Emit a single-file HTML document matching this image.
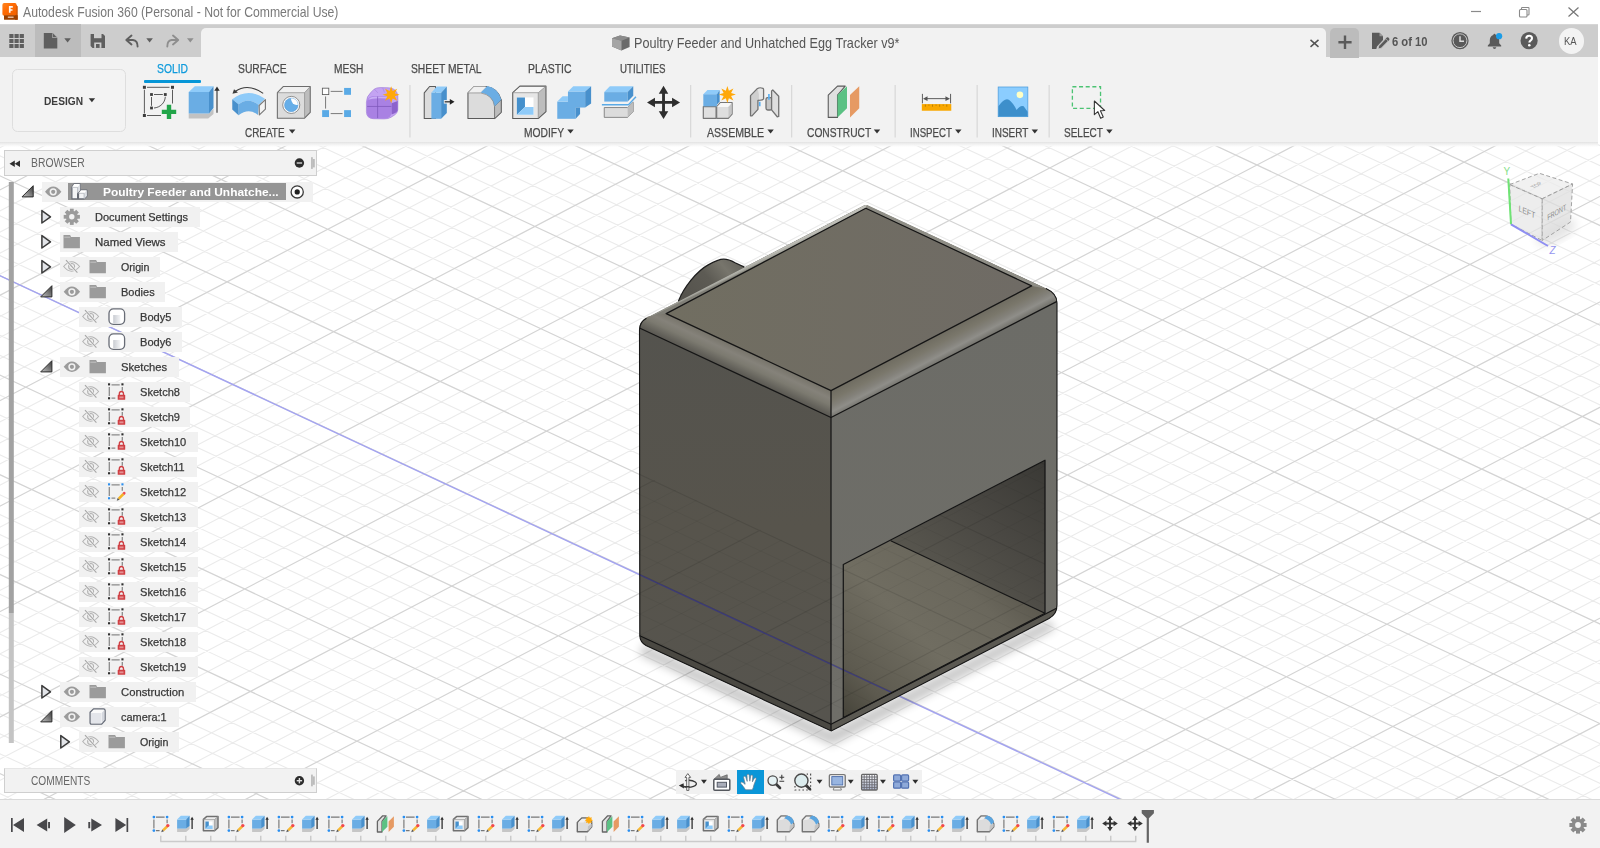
<!DOCTYPE html>
<html><head><meta charset="utf-8"><title>Autodesk Fusion 360</title>
<style>
html,body{margin:0;padding:0;width:1600px;height:848px;overflow:hidden;background:#fff;font-family:"Liberation Sans",sans-serif;}
.b{position:absolute;display:block;}
.t{position:absolute;line-height:20px;white-space:nowrap;transform-origin:0 50%;}
</style></head><body>
<svg class="b" style="left:0;top:0" width="1600" height="848" viewBox="0 0 1600 848">
<defs>
<clipPath id="cv"><rect x="0" y="141" width="1600" height="658"/></clipPath>
<clipPath id="thru"><polygon points="639.5,473 831,563 843.3,564.5 843.3,717.7 831,724.3 639.8,635.7"/><polygon points="843.3,564.5 1045,460.2 1045,613.3 843.3,717.7"/></clipPath>
<linearGradient id="gTop" x1="0" y1="0" x2="1" y2="0"><stop offset="0" stop-color="#716e61"/><stop offset="1" stop-color="#6f6b65"/></linearGradient>
<linearGradient id="gLeft" x1="0" y1="0" x2="0" y2="1"><stop offset="0" stop-color="#54534e"/><stop offset="0.5" stop-color="#57544c"/><stop offset="1" stop-color="#56544e"/></linearGradient>
<linearGradient id="gRight" x1="0" y1="0" x2="0" y2="1"><stop offset="0" stop-color="#6c6c67"/><stop offset="1" stop-color="#6f6e68"/></linearGradient>
<linearGradient id="gFl" gradientUnits="userSpaceOnUse" x1="750" y1="352.7" x2="739.6" y2="374.9"><stop offset="0" stop-color="#77746a"/><stop offset="0.3" stop-color="#85827a"/><stop offset="0.55" stop-color="#7c7a70"/><stop offset="0.85" stop-color="#64625b"/><stop offset="1" stop-color="#595751"/></linearGradient>
<linearGradient id="gFr" gradientUnits="userSpaceOnUse" x1="930" y1="338.9" x2="941.1" y2="360.1"><stop offset="0" stop-color="#6f6c61"/><stop offset="0.35" stop-color="#7a776b"/><stop offset="0.6" stop-color="#83817a"/><stop offset="0.8" stop-color="#8f8e89"/><stop offset="1" stop-color="#787771"/></linearGradient>
<linearGradient id="gFloor" gradientUnits="userSpaceOnUse" x1="843" y1="717" x2="1000" y2="560"><stop offset="0" stop-color="#454339"/><stop offset="0.18" stop-color="#5d5a4f"/><stop offset="0.5" stop-color="#706d61"/><stop offset="0.8" stop-color="#6a675c"/><stop offset="1" stop-color="#5a574d"/></linearGradient>
<linearGradient id="gWall" gradientUnits="userSpaceOnUse" x1="1045" y1="460" x2="930" y2="590"><stop offset="0" stop-color="#3a3935"/><stop offset="0.5" stop-color="#4a4843"/><stop offset="1" stop-color="#5a5850"/></linearGradient>
<linearGradient id="gCyl" gradientUnits="userSpaceOnUse" x1="688" y1="302" x2="736" y2="262"><stop offset="0" stop-color="#55534d"/><stop offset="0.5" stop-color="#5d5b54"/><stop offset="0.8" stop-color="#77756c"/><stop offset="1" stop-color="#68665f"/></linearGradient>
<linearGradient id="gBev" gradientUnits="userSpaceOnUse" x1="760" y1="259.5" x2="761.8" y2="263.2"><stop offset="0" stop-color="#bdbdb6"/><stop offset="0.6" stop-color="#a6a69e"/><stop offset="1" stop-color="#7f7e76"/></linearGradient>
<filter id="blur6" x="-20%" y="-20%" width="140%" height="140%"><feGaussianBlur stdDeviation="5"/></filter>
</defs>
<g clip-path="url(#cv)">
<rect x="0" y="141" width="1600" height="659" fill="#fff"/>
<path d="M-10.0 808.9L1610.0 1565.2M-10.0 788.9L1610.0 1545.3M-10.0 749.1L1610.0 1505.4M-10.0 729.2L1610.0 1485.5M-10.0 709.2L1610.0 1465.5M-10.0 689.3L1610.0 1445.6M-10.0 649.5L1610.0 1405.8M-10.0 629.5L1610.0 1385.8M-10.0 609.6L1610.0 1365.9M-10.0 589.7L1610.0 1346.0M-10.0 549.8L1610.0 1306.1M-10.0 529.9L1610.0 1286.2M-10.0 510.0L1610.0 1266.3M-10.0 490.1L1610.0 1246.4M-10.0 450.2L1610.0 1206.5M-10.0 430.3L1610.0 1186.6M-10.0 410.4L1610.0 1166.7M-10.0 390.4L1610.0 1146.7M-10.0 350.6L1610.0 1106.9M-10.0 330.7L1610.0 1087.0M-10.0 310.7L1610.0 1067.0M-10.0 290.8L1610.0 1047.1M-10.0 251.0L1610.0 1007.3M-10.0 231.0L1610.0 987.3M-10.0 211.1L1610.0 967.4M-10.0 191.2L1610.0 947.5M-10.0 151.3L1610.0 907.6M-10.0 131.4L1610.0 887.7M-10.0 111.5L1610.0 867.8M-10.0 91.5L1610.0 847.8M-10.0 51.7L1610.0 808.0M-10.0 31.8L1610.0 788.1M-10.0 11.8L1610.0 768.1M-10.0 -8.1L1610.0 748.2M-10.0 -47.9L1610.0 708.4M-10.0 -67.9L1610.0 688.4M-10.0 -87.8L1610.0 668.5M-10.0 -107.7L1610.0 648.6M-10.0 -147.6L1610.0 608.7M-10.0 -167.5L1610.0 588.8M-10.0 -187.4L1610.0 568.9M-10.0 -207.3L1610.0 549.0M-10.0 -247.2L1610.0 509.1M-10.0 -267.1L1610.0 489.2M-10.0 -287.0L1610.0 469.3M-10.0 -307.0L1610.0 449.3M-10.0 -346.8L1610.0 409.5M-10.0 -366.7L1610.0 389.6M-10.0 -386.7L1610.0 369.6M-10.0 -406.6L1610.0 349.7M-10.0 -446.5L1610.0 309.9M-10.0 -466.4L1610.0 289.9M-10.0 -486.3L1610.0 270.0M-10.0 -506.2L1610.0 250.1M-10.0 -546.1L1610.0 210.2M-10.0 -566.0L1610.0 190.3M-10.0 -585.9L1610.0 170.4M-10.0 -605.9L1610.0 150.4M-10.0 131.9L1610.0 -715.4M-10.0 152.9L1610.0 -694.3M-10.0 174.0L1610.0 -673.2M-10.0 216.2L1610.0 -631.1M-10.0 237.3L1610.0 -610.0M-10.0 258.4L1610.0 -588.9M-10.0 279.4L1610.0 -567.8M-10.0 321.6L1610.0 -525.7M-10.0 342.7L1610.0 -504.6M-10.0 363.8L1610.0 -483.5M-10.0 384.9L1610.0 -462.4M-10.0 427.0L1610.0 -420.2M-10.0 448.1L1610.0 -399.1M-10.0 469.2L1610.0 -378.1M-10.0 490.3L1610.0 -357.0M-10.0 532.4L1610.0 -314.8M-10.0 553.5L1610.0 -293.7M-10.0 574.6L1610.0 -272.6M-10.0 595.7L1610.0 -251.6M-10.0 637.9L1610.0 -209.4M-10.0 659.0L1610.0 -188.3M-10.0 680.0L1610.0 -167.2M-10.0 701.1L1610.0 -146.1M-10.0 743.3L1610.0 -104.0M-10.0 764.4L1610.0 -82.9M-10.0 785.5L1610.0 -61.8M-10.0 806.5L1610.0 -40.7M-10.0 848.7L1610.0 1.4M-10.0 869.8L1610.0 22.5M-10.0 890.9L1610.0 43.6M-10.0 912.0L1610.0 64.7M-10.0 954.1L1610.0 106.9M-10.0 975.2L1610.0 127.9M-10.0 996.3L1610.0 149.0M-10.0 1017.4L1610.0 170.1M-10.0 1059.5L1610.0 212.3M-10.0 1080.6L1610.0 233.4M-10.0 1101.7L1610.0 254.5M-10.0 1122.8L1610.0 275.5M-10.0 1165.0L1610.0 317.7M-10.0 1186.0L1610.0 338.8M-10.0 1207.1L1610.0 359.9M-10.0 1228.2L1610.0 381.0M-10.0 1270.4L1610.0 423.1M-10.0 1291.5L1610.0 444.2M-10.0 1312.6L1610.0 465.3M-10.0 1333.6L1610.0 486.4M-10.0 1375.8L1610.0 528.5M-10.0 1396.9L1610.0 549.6M-10.0 1418.0L1610.0 570.7M-10.0 1439.1L1610.0 591.8M-10.0 1481.2L1610.0 634.0M-10.0 1502.3L1610.0 655.0M-10.0 1523.4L1610.0 676.1M-10.0 1544.5L1610.0 697.2M-10.0 1586.6L1610.0 739.4M-10.0 1607.7L1610.0 760.5M-10.0 1628.8L1610.0 781.5M-10.0 1649.9L1610.0 802.6" stroke="#ebebeb" stroke-width="1.1" fill="none"/>
<path d="M-10.0 769.0L1610.0 1525.3M-10.0 669.4L1610.0 1425.7M-10.0 569.8L1610.0 1326.1M-10.0 470.1L1610.0 1226.4M-10.0 370.5L1610.0 1126.8M-10.0 270.9L1610.0 1027.2M-10.0 171.2L1610.0 927.6M-10.0 71.6L1610.0 827.9M-10.0 -28.0L1610.0 728.3M-10.0 -127.6L1610.0 628.7M-10.0 -227.3L1610.0 529.0M-10.0 -326.9L1610.0 429.4M-10.0 -426.5L1610.0 329.8M-10.0 -526.2L1610.0 230.2M-10.0 -625.8L1610.0 130.5M-10.0 195.1L1610.0 -652.2M-10.0 300.5L1610.0 -546.7M-10.0 405.9L1610.0 -441.3M-10.0 511.4L1610.0 -335.9M-10.0 616.8L1610.0 -230.5M-10.0 722.2L1610.0 -125.1M-10.0 827.6L1610.0 -19.6M-10.0 933.0L1610.0 85.8M-10.0 1038.5L1610.0 191.2M-10.0 1143.9L1610.0 296.6M-10.0 1249.3L1610.0 402.0M-10.0 1354.7L1610.0 507.5M-10.0 1460.1L1610.0 612.9M-10.0 1565.6L1610.0 718.3" stroke="#d4d4d4" stroke-width="1.2" fill="none"/>
<path d="M-10 271 L1160 818" stroke="#a3a3f0" stroke-width="1.4" fill="none"/>
<ellipse cx="1556" cy="232" rx="22" ry="9" fill="#000" opacity="0.10" filter="url(#blur6)" transform="rotate(-28 1556 232)"/>
<g stroke="#9a9a9a" stroke-width="0.9" stroke-dasharray="4 2.5" stroke-linejoin="round">
<polygon points="1509.7,184.6 1539.4,173.3 1572.6,184 1542.2,198.8" fill="#ececec" fill-opacity="0.72"/>
<polygon points="1509.7,184.6 1542.2,198.8 1542.2,240.5 1511,224.3" fill="#e6e6e6" fill-opacity="0.72"/>
<polygon points="1542.2,198.8 1572.6,184 1570.5,222 1542.2,240.5" fill="#dedede" fill-opacity="0.72"/>
</g>
<text transform="matrix(0.92,0.42,-0.05,1,1518.5,211)" font-family="Liberation Sans, sans-serif" font-size="8.5" fill="#8a8a8a" textLength="18" lengthAdjust="spacingAndGlyphs">LEFT</text>
<text transform="matrix(0.86,-0.5,0.05,1,1547.5,220.5)" font-family="Liberation Sans, sans-serif" font-size="8" fill="#8a8a8a" textLength="22" lengthAdjust="spacingAndGlyphs">FRONT</text>
<text transform="matrix(0.75,-0.4,0.8,0.38,1534,188.5)" font-family="Liberation Sans, sans-serif" font-size="7" fill="#9a9a9a" textLength="12" lengthAdjust="spacingAndGlyphs">TOP</text>
<path d="M1508.3 178.5L1511 224.3" stroke="#6fe374" stroke-width="2" fill="none"/>
<path d="M1511 224.3L1548 246" stroke="#8e8ef2" stroke-width="2" fill="none"/>
<text x="1503.4" y="175.2" font-family="Liberation Sans, sans-serif" font-size="10" fill="#86e08a">Y</text>
<text x="1549.6" y="253.6" font-family="Liberation Sans, sans-serif" font-size="10" fill="#9696f0" font-style="italic">Z</text>
<path d="M643 644 L831 731 L1047 620 L1056 628 L832 745 L640 655Z" fill="#000" opacity="0.22" filter="url(#blur6)"/>
<path d="M678.5 301 C684 287 697 271 708.2 264.9 C715 261 720 259.2 723.8 259.2 C728 259.2 732 261 735.1 262.7 L744 267 V280 L690 310 Z" fill="url(#gCyl)" stroke="#1c1c1c" stroke-width="1.2"/>
<path d="M831.3 731 L646 645.5 Q640 642 639.8 635.7 L639.5 330 Q639.5 321.6 648 317.3 L863.5 205.8 Q865.3 204.4 867.2 205.4 L1046 288.5 Q1057 293.5 1057 303 L1057 605 Q1057 614 1049 618.5 Z" fill="#4f4d47"/>
<path d="M648 317.3 L863.5 205.8 Q865.3 204.4 867.2 205.4 L865.8 208.3 L666.2 313.6 L650 322Z" fill="url(#gBev)"/>
<path d="M867.2 205 L1046 288.5 Q1052 291 1055 296 L1031.6 285.9 L865.8 208.3Z" fill="#8f8e86"/>
<path d="M666.2 313.6 L831 390.6 L831 417.5 L639.5 328 Q639.5 321 648 316.5 Z" fill="url(#gFl)"/>
<path d="M831 390.6 L1031.6 285.9 L1046 288.5 Q1057 293.5 1057 301.4 L831 417.5Z" fill="url(#gFr)"/>
<polygon points="666.2,313.6 865.8,208.3 1031.6,285.9 831,390.6" fill="url(#gTop)"/>
<polygon points="639.5,328 831,417.5 831,724.3 639.8,635.7" fill="url(#gLeft)"/>
<polygon points="831,417.5 1057,301.4 1057,608 831,724.3" fill="url(#gRight)"/>
<polygon points="843.3,564.5 890.7,540.8 1045,613.3 843.3,717.7" fill="url(#gFloor)"/>
<polygon points="890.7,540.8 1045,460.2 1045,613.3" fill="url(#gWall)"/>
<path d="M639.8 635.7 L831 724.3 L831.3 731 L646 645.5 Q640 642 639.8 635.7Z" fill="#4a4842"/>
<path d="M831 724.3 L1057 608 Q1057 614 1049 618.5 L831.3 731Z" fill="#5b5952"/>
<g clip-path="url(#thru)"><path d="M-10.0 808.9L1610.0 1565.2M-10.0 788.9L1610.0 1545.3M-10.0 749.1L1610.0 1505.4M-10.0 729.2L1610.0 1485.5M-10.0 709.2L1610.0 1465.5M-10.0 689.3L1610.0 1445.6M-10.0 649.5L1610.0 1405.8M-10.0 629.5L1610.0 1385.8M-10.0 609.6L1610.0 1365.9M-10.0 589.7L1610.0 1346.0M-10.0 549.8L1610.0 1306.1M-10.0 529.9L1610.0 1286.2M-10.0 510.0L1610.0 1266.3M-10.0 490.1L1610.0 1246.4M-10.0 450.2L1610.0 1206.5M-10.0 430.3L1610.0 1186.6M-10.0 410.4L1610.0 1166.7M-10.0 390.4L1610.0 1146.7M-10.0 350.6L1610.0 1106.9M-10.0 330.7L1610.0 1087.0M-10.0 310.7L1610.0 1067.0M-10.0 290.8L1610.0 1047.1M-10.0 251.0L1610.0 1007.3M-10.0 231.0L1610.0 987.3M-10.0 211.1L1610.0 967.4M-10.0 191.2L1610.0 947.5M-10.0 151.3L1610.0 907.6M-10.0 131.4L1610.0 887.7M-10.0 111.5L1610.0 867.8M-10.0 91.5L1610.0 847.8M-10.0 51.7L1610.0 808.0M-10.0 31.8L1610.0 788.1M-10.0 11.8L1610.0 768.1M-10.0 -8.1L1610.0 748.2M-10.0 -47.9L1610.0 708.4M-10.0 -67.9L1610.0 688.4M-10.0 -87.8L1610.0 668.5M-10.0 -107.7L1610.0 648.6M-10.0 -147.6L1610.0 608.7M-10.0 -167.5L1610.0 588.8M-10.0 -187.4L1610.0 568.9M-10.0 -207.3L1610.0 549.0M-10.0 -247.2L1610.0 509.1M-10.0 -267.1L1610.0 489.2M-10.0 -287.0L1610.0 469.3M-10.0 -307.0L1610.0 449.3M-10.0 -346.8L1610.0 409.5M-10.0 -366.7L1610.0 389.6M-10.0 -386.7L1610.0 369.6M-10.0 -406.6L1610.0 349.7M-10.0 -446.5L1610.0 309.9M-10.0 -466.4L1610.0 289.9M-10.0 -486.3L1610.0 270.0M-10.0 -506.2L1610.0 250.1M-10.0 -546.1L1610.0 210.2M-10.0 -566.0L1610.0 190.3M-10.0 -585.9L1610.0 170.4M-10.0 -605.9L1610.0 150.4M-10.0 131.9L1610.0 -715.4M-10.0 152.9L1610.0 -694.3M-10.0 174.0L1610.0 -673.2M-10.0 216.2L1610.0 -631.1M-10.0 237.3L1610.0 -610.0M-10.0 258.4L1610.0 -588.9M-10.0 279.4L1610.0 -567.8M-10.0 321.6L1610.0 -525.7M-10.0 342.7L1610.0 -504.6M-10.0 363.8L1610.0 -483.5M-10.0 384.9L1610.0 -462.4M-10.0 427.0L1610.0 -420.2M-10.0 448.1L1610.0 -399.1M-10.0 469.2L1610.0 -378.1M-10.0 490.3L1610.0 -357.0M-10.0 532.4L1610.0 -314.8M-10.0 553.5L1610.0 -293.7M-10.0 574.6L1610.0 -272.6M-10.0 595.7L1610.0 -251.6M-10.0 637.9L1610.0 -209.4M-10.0 659.0L1610.0 -188.3M-10.0 680.0L1610.0 -167.2M-10.0 701.1L1610.0 -146.1M-10.0 743.3L1610.0 -104.0M-10.0 764.4L1610.0 -82.9M-10.0 785.5L1610.0 -61.8M-10.0 806.5L1610.0 -40.7M-10.0 848.7L1610.0 1.4M-10.0 869.8L1610.0 22.5M-10.0 890.9L1610.0 43.6M-10.0 912.0L1610.0 64.7M-10.0 954.1L1610.0 106.9M-10.0 975.2L1610.0 127.9M-10.0 996.3L1610.0 149.0M-10.0 1017.4L1610.0 170.1M-10.0 1059.5L1610.0 212.3M-10.0 1080.6L1610.0 233.4M-10.0 1101.7L1610.0 254.5M-10.0 1122.8L1610.0 275.5M-10.0 1165.0L1610.0 317.7M-10.0 1186.0L1610.0 338.8M-10.0 1207.1L1610.0 359.9M-10.0 1228.2L1610.0 381.0M-10.0 1270.4L1610.0 423.1M-10.0 1291.5L1610.0 444.2M-10.0 1312.6L1610.0 465.3M-10.0 1333.6L1610.0 486.4M-10.0 1375.8L1610.0 528.5M-10.0 1396.9L1610.0 549.6M-10.0 1418.0L1610.0 570.7M-10.0 1439.1L1610.0 591.8M-10.0 1481.2L1610.0 634.0M-10.0 1502.3L1610.0 655.0M-10.0 1523.4L1610.0 676.1M-10.0 1544.5L1610.0 697.2M-10.0 1586.6L1610.0 739.4M-10.0 1607.7L1610.0 760.5M-10.0 1628.8L1610.0 781.5M-10.0 1649.9L1610.0 802.6" stroke="#000" stroke-opacity="0.045" stroke-width="1" fill="none"/><path d="M-10.0 769.0L1610.0 1525.3M-10.0 669.4L1610.0 1425.7M-10.0 569.8L1610.0 1326.1M-10.0 470.1L1610.0 1226.4M-10.0 370.5L1610.0 1126.8M-10.0 270.9L1610.0 1027.2M-10.0 171.2L1610.0 927.6M-10.0 71.6L1610.0 827.9M-10.0 -28.0L1610.0 728.3M-10.0 -127.6L1610.0 628.7M-10.0 -227.3L1610.0 529.0M-10.0 -326.9L1610.0 429.4M-10.0 -426.5L1610.0 329.8M-10.0 -526.2L1610.0 230.2M-10.0 -625.8L1610.0 130.5M-10.0 195.1L1610.0 -652.2M-10.0 300.5L1610.0 -546.7M-10.0 405.9L1610.0 -441.3M-10.0 511.4L1610.0 -335.9M-10.0 616.8L1610.0 -230.5M-10.0 722.2L1610.0 -125.1M-10.0 827.6L1610.0 -19.6M-10.0 933.0L1610.0 85.8M-10.0 1038.5L1610.0 191.2M-10.0 1143.9L1610.0 296.6M-10.0 1249.3L1610.0 402.0M-10.0 1354.7L1610.0 507.5M-10.0 1460.1L1610.0 612.9M-10.0 1565.6L1610.0 718.3" stroke="#000" stroke-opacity="0.10" stroke-width="1.1" fill="none"/><path d="M-10 271 L1160 818" stroke="#2525a0" stroke-opacity="0.5" stroke-width="1.4" fill="none"/></g>
<path d="M666.2 313.6 L865.8 208.3 L1031.6 285.9 L831 390.6Z" fill="none" stroke="#161616" stroke-width="1.25" stroke-linejoin="round"/>
<path d="M639.5 328 L831 417.5 L1057 301.4" fill="none" stroke="#161616" stroke-width="1.25" stroke-linejoin="round"/>
<path d="M831 390.6 L831 731" fill="none" stroke="#161616" stroke-width="1.25" stroke-linejoin="round"/>
<path d="M639.8 635.7 L831 724.3 L1057 608" fill="none" stroke="#161616" stroke-width="1.25" stroke-linejoin="round"/>
<path d="M843.3 564.5 L1045 460.2 L1045 613.3 L843.3 717.7Z" fill="none" stroke="#161616" stroke-width="1.25" stroke-linejoin="round"/>
<path d="M890.7 540.8 L1045 613.3" fill="none" stroke="#161616" stroke-width="1.25" stroke-linejoin="round"/>
<path d="M646.5 318.2Q639.5 322 639.5 330L639.8 635.7Q640 642 646 645.5L831.3 731L1049 618.5Q1057 614 1057 605L1057 303Q1057 293.5 1046 288.5" fill="none" stroke="#161616" stroke-width="1.1"/>
</g>
</svg>
<div class="b" style="left:0px;top:0px;width:1600px;height:24px;background:#fff;"></div>
<svg class="b" style="left:0px;top:0px;" width="22" height="24" viewBox="0 0 22 24"><defs><linearGradient id="ai" x1="0" y1="0" x2="1" y2="1"><stop offset="0" stop-color="#ff8420"/><stop offset="0.4" stop-color="#ff6c05"/><stop offset="1" stop-color="#f06000"/></linearGradient></defs>
<path d="M15 3.4L17.7 6.6V19.8H15Z" fill="#c24e00"/><rect x="2.4" y="3.1" width="14.2" height="12.6" rx="1.8" fill="url(#ai)"/><path d="M4 15.3H17.7V19.8H4.6Q4 19.8 4 19.2Z" fill="#9b4000"/>
<path d="M8.9 6.1h3.9v1.6h-2.2v1.5h1.9v1.5h-1.9v2.1H8.9z" fill="#fff" opacity="0.95"/><rect x="7.8" y="16.4" width="5.8" height="1.7" rx="0.3" fill="#e3b89a"/></svg>
<span class="t" style="left:22.80px;top:1.78px;font-size:14.5px;color:#797979;transform:scaleX(0.8417);">Autodesk Fusion 360 (Personal - Not for Commercial Use)</span>
<svg class="b" style="left:1460px;top:0px;" width="130" height="24" viewBox="0 0 130 24"><path d="M11 11.5H21" stroke="#8a8a8a" stroke-width="1.2"/>
<rect x="59.5" y="9.5" width="7.5" height="7.5" fill="none" stroke="#8a8a8a" stroke-width="1.1" rx="1"/><path d="M61.5 9.5V8.2Q61.5 7.5 62.3 7.5H68.3Q69 7.5 69 8.3V14.3Q69 15 68.2 15H67" fill="none" stroke="#8a8a8a" stroke-width="1.1"/>
<path d="M108.5 7.5L118.5 16.5M118.5 7.5L108.5 16.5" stroke="#777" stroke-width="1.2"/></svg>
<div class="b" style="left:0px;top:24px;width:1598px;height:33.5px;background:#cdcdcd;"></div>
<div class="b" style="left:0px;top:24px;width:1598px;height:1px;background:#d6d6d6;"></div>
<div class="b" style="left:34.5px;top:24px;width:46.5px;height:33.5px;background:#bcbcbc;"></div>
<svg class="b" style="left:0px;top:24px;" width="210" height="34" viewBox="0 24 210 34"><rect x="9.3" y="34" width="4.2" height="4" fill="#5f5f5f"/><rect x="9.3" y="39" width="4.2" height="4" fill="#5f5f5f"/><rect x="9.3" y="44" width="4.2" height="4" fill="#5f5f5f"/><rect x="14.5" y="34" width="4.2" height="4" fill="#5f5f5f"/><rect x="14.5" y="39" width="4.2" height="4" fill="#5f5f5f"/><rect x="14.5" y="44" width="4.2" height="4" fill="#5f5f5f"/><rect x="19.700000000000003" y="34" width="4.2" height="4" fill="#5f5f5f"/><rect x="19.700000000000003" y="39" width="4.2" height="4" fill="#5f5f5f"/><rect x="19.700000000000003" y="44" width="4.2" height="4" fill="#5f5f5f"/><path d="M43.8 33H52.5L57.3 37.8V48.6H43.8Z" fill="#5f5f5f"/><path d="M52.3 33V38H57.3" fill="#bcbcbc" opacity="0.9"/><path d="M53 33.6L56.7 37.3H53Z" fill="#5f5f5f"/><path d="M64.3 38.2H70.9L67.6 42.6Z" fill="#5f5f5f"/><path d="M90.6 34H103L105 36V47.9H92.5L90.6 46Z" fill="#5f5f5f"/><rect x="94" y="34" width="7.5" height="4.2" fill="#cdcdcd"/><rect x="94.2" y="42.5" width="7.2" height="5.4" fill="#cdcdcd"/><rect x="96" y="44" width="3.6" height="3.9" fill="#5f5f5f"/><path d="M131.5 35.5L126.3 40L131.5 44.5M126.8 40H133Q137.6 40.5 137.6 46.5" fill="none" stroke="#5f5f5f" stroke-width="1.9" stroke-linecap="round" stroke-linejoin="round"/><path d="M146.3 38.2H152.9L149.6 42.6Z" fill="#5f5f5f"/><path d="M173 35.5L178.2 40L173 44.5M177.7 40H171.5Q167.3 40.5 167.3 46.5" fill="none" stroke="#8e8e8e" stroke-width="1.9" stroke-linecap="round" stroke-linejoin="round"/><path d="M187 38.2H193.6L190.3 42.6Z" fill="#8e8e8e"/></svg>
<div class="b" style="left:201px;top:28px;width:1125px;height:30px;background:#f2f2f2;border-radius:5px 5px 0 0;"></div>
<div class="b" style="left:0px;top:57.3px;width:1598px;height:84.7px;background:#f2f2f2;"></div>
<div class="b" style="left:0px;top:142px;width:1598px;height:4.5px;background:linear-gradient(#e2e2e2,#efefef 35%,rgba(247,247,247,0.9) 70%,rgba(252,252,252,0));"></div>
<svg class="b" style="left:611px;top:34px;" width="20" height="18" viewBox="0 0 20 18"><path d="M1 4.2L9 1.6L18.6 3.6V13L10.5 16.6L1 12.5Z" fill="#6a6a6a"/><path d="M1 4.2L10.5 6.8L18.6 3.6L9 1.6Z" fill="#8c8c8c"/><path d="M1 4.2L10.5 6.8V16.6L1 12.5Z" fill="#a5a5a5"/></svg>
<span class="t" style="left:634.40px;top:33.35px;font-size:14.3px;color:#555;transform:scaleX(0.8839);">Poultry Feeder and Unhatched Egg Tracker v9*</span>
<svg class="b" style="left:1306px;top:36px;" width="16" height="14" viewBox="0 0 16 14"><path d="M4.5 3.9L12.5 10.9M12.5 3.9L4.5 10.9" stroke="#555" stroke-width="1.5"/></svg>
<div class="b" style="left:1330px;top:28px;width:29.4px;height:29.5px;background:#bcbcbc;border-radius:5px 5px 0 0;"></div>
<svg class="b" style="left:1336px;top:33px;" width="18" height="18" viewBox="0 0 18 18"><path d="M9 2.6V16.1M2.4 9.3H15.6" stroke="#5a5a5a" stroke-width="2.4"/></svg>
<svg class="b" style="left:1370px;top:31px;" width="20" height="20" viewBox="0 0 20 20"><path d="M2 1.8H9.5L13 5.3V9L7 15.5L6.3 18H2Z" fill="#5a5a5a"/><path d="M9.5 1.8V5.3H13Z" fill="#9a9a9a"/><path d="M8 18L8.8 14.8L15.8 7.6L18.3 10L11.2 17.2Z" fill="#5a5a5a" stroke="#cdcdcd" stroke-width="0.8"/><path d="M15.8 7.6L16.8 6.5Q17.6 5.9 18.4 6.6L19.2 7.4Q19.8 8.2 19.2 9L18.3 10Z" fill="#5a5a5a"/></svg>
<span class="t" style="left:1391.50px;top:31.87px;font-size:12.5px;color:#555;font-weight:bold;transform:scaleX(0.8990);">6 of 10</span>
<svg class="b" style="left:1450px;top:31px;" width="20" height="20" viewBox="0 0 20 20"><circle cx="10" cy="9.7" r="8.6" fill="#5a5a5a"/><circle cx="10" cy="9.7" r="6.9" fill="none" stroke="#c4c4c4" stroke-width="1"/><path d="M10 5.2V10.2H14" fill="none" stroke="#dcdcdc" stroke-width="1.5"/></svg>
<svg class="b" style="left:1485px;top:31px;" width="20" height="20" viewBox="0 0 20 20"><path d="M9.5 2.8Q10.5 2.8 10.7 3.9Q14.2 5 14.2 9.3V12.2L16.2 14.6V15.4H2.8V14.6L4.8 12.2V9.3Q4.8 5 8.3 3.9Q8.5 2.8 9.5 2.8Z" fill="#5a5a5a"/><path d="M7.7 16.3H11.3Q11 18 9.5 18Q8 18 7.7 16.3Z" fill="#5a5a5a"/><circle cx="14.1" cy="5.2" r="3.1" fill="#1b9de8"/></svg>
<svg class="b" style="left:1519px;top:31px;" width="20" height="20" viewBox="0 0 20 20"><circle cx="10.1" cy="9.7" r="8.6" fill="#5a5a5a"/><path d="M7.2 7.6Q7.3 4.8 10.1 4.8Q13 4.8 13 7.3Q13 8.8 11.5 9.7Q10.4 10.4 10.4 11.6" fill="none" stroke="#fff" stroke-width="2.1"/><circle cx="10.3" cy="14.3" r="1.3" fill="#fff"/></svg>
<div class="b" style="left:1558.7px;top:28px;width:25.6px;height:25.6px;background:#f3f3f3;border-radius:50%;"></div>
<span class="t" style="left:1564.00px;top:31.19px;font-size:11px;color:#555;transform:scaleX(0.8586);">KA</span>
<span class="t" style="left:156.80px;top:59.44px;font-size:12px;color:#0f9bdc;transform:scaleX(0.8608);-webkit-text-stroke:0.25px #0f9bdc;">SOLID</span>
<span class="t" style="left:237.50px;top:59.44px;font-size:12px;color:#4a4a4a;transform:scaleX(0.8592);-webkit-text-stroke:0.25px #4a4a4a;">SURFACE</span>
<span class="t" style="left:334.00px;top:59.44px;font-size:12px;color:#4a4a4a;transform:scaleX(0.8508);-webkit-text-stroke:0.25px #4a4a4a;">MESH</span>
<span class="t" style="left:410.50px;top:59.44px;font-size:12px;color:#4a4a4a;transform:scaleX(0.8572);-webkit-text-stroke:0.25px #4a4a4a;">SHEET METAL</span>
<span class="t" style="left:528.00px;top:59.44px;font-size:12px;color:#4a4a4a;transform:scaleX(0.8697);-webkit-text-stroke:0.25px #4a4a4a;">PLASTIC</span>
<span class="t" style="left:620.00px;top:59.44px;font-size:12px;color:#4a4a4a;transform:scaleX(0.8106);-webkit-text-stroke:0.25px #4a4a4a;">UTILITIES</span>
<div class="b" style="left:144px;top:79.6px;width:56.5px;height:3.3px;background:#0696d7;border-radius:1px;"></div>
<div class="b" style="left:12.2px;top:68.5px;width:114.2px;height:63.5px;background:#f3f3f3;border:1.6px solid #dedede;border-radius:5.5px;box-sizing:border-box;"></div>
<span class="t" style="left:44.20px;top:90.72px;font-size:11.5px;color:#3c3c3c;font-weight:bold;transform:scaleX(0.8845);">DESIGN</span>
<span class="t" style="left:245.00px;top:122.94px;font-size:12px;color:#4a4a4a;transform:scaleX(0.8266);-webkit-text-stroke:0.25px #4a4a4a;">CREATE</span>
<span class="t" style="left:524.00px;top:122.94px;font-size:12px;color:#4a4a4a;transform:scaleX(0.8572);-webkit-text-stroke:0.25px #4a4a4a;">MODIFY</span>
<span class="t" style="left:707.20px;top:122.94px;font-size:12px;color:#4a4a4a;transform:scaleX(0.8810);-webkit-text-stroke:0.25px #4a4a4a;">ASSEMBLE</span>
<span class="t" style="left:806.60px;top:122.94px;font-size:12px;color:#4a4a4a;transform:scaleX(0.8523);-webkit-text-stroke:0.25px #4a4a4a;">CONSTRUCT</span>
<span class="t" style="left:910.00px;top:122.94px;font-size:12px;color:#4a4a4a;transform:scaleX(0.8037);-webkit-text-stroke:0.25px #4a4a4a;">INSPECT</span>
<span class="t" style="left:991.60px;top:122.94px;font-size:12px;color:#4a4a4a;transform:scaleX(0.8290);-webkit-text-stroke:0.25px #4a4a4a;">INSERT</span>
<span class="t" style="left:1063.80px;top:122.94px;font-size:12px;color:#4a4a4a;transform:scaleX(0.8333);-webkit-text-stroke:0.25px #4a4a4a;">SELECT</span>
<svg class="b" style="left:0;top:0" width="1600" height="145" viewBox="0 0 1600 145"><rect x="409.3" y="85" width="1.3" height="52.5" fill="#d9d9d9"/><rect x="690" y="85" width="1.3" height="52.5" fill="#d9d9d9"/><rect x="791" y="85" width="1.3" height="52.5" fill="#d9d9d9"/><rect x="894.5" y="85" width="1.3" height="52.5" fill="#d9d9d9"/><rect x="976.5" y="85" width="1.3" height="52.5" fill="#d9d9d9"/><rect x="1048.5" y="85" width="1.3" height="52.5" fill="#d9d9d9"/><path d="M88.7 98.3h6.4l-3.2 4z" fill="#333"/><path d="M289 129.6h6.4l-3.2 4z" fill="#333"/><path d="M567.3 129.6h6.4l-3.2 4z" fill="#333"/><path d="M767.4 129.6h6.4l-3.2 4z" fill="#333"/><path d="M873.8 129.6h6.4l-3.2 4z" fill="#333"/><path d="M955.1 129.6h6.4l-3.2 4z" fill="#333"/><path d="M1031.6 129.6h6.4l-3.2 4z" fill="#333"/><path d="M1106.2 129.6h6.4l-3.2 4z" fill="#333"/><g transform="translate(140,58) scale(0.10000)"><path d="M70 293H295M44 318V555M325 318V455M70 575H210" stroke="#4a4a4a" stroke-width="9" fill="none"/><rect x="29" y="278" width="30" height="30" fill="#3c3c3c"/><rect x="310" y="278" width="30" height="30" fill="#3c3c3c"/><rect x="29" y="560" width="30" height="30" fill="#3c3c3c"/><path d="M140 365H228M115 390V478M253 388C250 450 200 495 140 500" stroke="#4a4a4a" stroke-width="9" fill="none"/><rect x="101" y="351" width="28" height="28" fill="#3c3c3c"/><rect x="239" y="351" width="28" height="28" fill="#3c3c3c"/><rect x="101" y="486" width="28" height="28" fill="#3c3c3c"/><path d="M268 467h44v50h50v42h-50v50h-44v-50h-50v-42h50z" fill="#22a549"/></g><g transform="translate(140,58) scale(0.10000)"><polygon points="487,555 690,555 735,508 735,560 682,606 487,606" fill="#c2c2c2" /><polygon points="487,340 690,340 690,555 487,555" fill="#6aade4" /><polygon points="487,340 548,283 735,283 690,340" fill="#8fcbf9" /><polygon points="690,340 735,283 735,500 690,555" fill="#4890cc" /><path d="M770 548V318" stroke="#2e2e2e" stroke-width="11" fill="none"/><path d="M743 328L770 286L797 328Z" fill="#2e2e2e"/></g><g transform="translate(220,82) scale(0.11876)"><path d="M363.6 96Q233.5 5.5 128 80" stroke="#3c3c3c" stroke-width="9" fill="none"/><path d="M105 99L118 62L151 88Z" fill="#3c3c3c"/><path d="M103.3 145.1Q237.2 41.4 378.7 141.3L325.9 194.1Q237.2 122.5 156.1 186.6Z" fill="#8fcbf9"/><path d="M156.1 186.6Q237.2 122.5 325.9 194.1L320.2 277.1Q240 214.8 156.1 280.9Z" fill="#6aade4"/><path d="M103.3 145.1L156.1 186.6L156.1 280.9L103.3 231.8Z" fill="#4890cc"/><path d="M329.6 197.9L382.4 148.9L382.4 228.1L331.5 277.1Z" fill="#f4f4f4" stroke="#7a7a7a" stroke-width="10" stroke-linejoin="round"/></g><g transform="translate(220,82) scale(0.11876)"><polygon points="483,90 712,90 712,305 483,305" fill="#dcdcdc" /><polygon points="483,90 532,38 760,38 712,90" fill="#f0f0f0" /><polygon points="712,90 760,38 760,255 712,305" fill="#bdbdbd" /><path d="M483 90L532 38H760V255L712 305H483Z" fill="none" stroke="#6c6c6c" stroke-width="9" stroke-linejoin="round"/><path d="M483 90H712V305M712 90L760 38" fill="none" stroke="#8a8a8a" stroke-width="6"/><circle cx="600" cy="193" r="72" fill="#fdfdfd" stroke="#7c7c7c" stroke-width="7"/><clipPath id="hcl"><circle cx="600" cy="193" r="57"/></clipPath><circle cx="600" cy="193" r="57" fill="#66aee8" stroke="#4a90d0" stroke-width="4"/><circle cx="646" cy="146" r="47" fill="#fdfdfd" clip-path="url(#hcl)"/></g><g transform="translate(220,82) scale(0.11876)"><path d="M932 79H1032M889 122V224M932 266H1032" stroke="#626262" stroke-width="7" fill="none"/><rect x="862" y="52" width="54" height="54" fill="#fff" stroke="#5a5a5a" stroke-width="7"/><rect x="1045" y="50" width="58" height="58" fill="#5aaae6"/><rect x="860" y="237" width="58" height="58" fill="#5aaae6"/><rect x="1045" y="237" width="58" height="58" fill="#5aaae6"/></g><g transform="translate(220,82) scale(0.11876)"><path d="M1233 170Q1233 120 1272 86L1298 60Q1318 47 1350 47L1420 49Q1470 52 1490 90Q1500 110 1498 160L1497 235Q1495 262 1470 278L1440 297Q1420 311 1380 311L1290 309Q1233 305 1233 250Z" fill="#c3a3f2" stroke="#9a74d4" stroke-width="5"/><rect x="1237" y="119" width="208" height="188" rx="52" fill="#a981e3"/><path d="M1248 150Q1262 125 1300 124L1400 124Q1425 126 1436 146Q1400 136 1340 137Q1280 138 1248 150Z" fill="#c9aef5"/><path d="M1445 178L1496 160V236Q1494 258 1445 274Z" fill="#8c62cc"/><path d="M1239 206H1443M1327 122V304" stroke="#7c56b8" stroke-width="6" fill="none"/><path d="M1300 60L1330 92M1370 49L1385 88" stroke="#a885dc" stroke-width="5" fill="none"/><polygon points="1441.0,35.0 1454.0,75.6 1491.9,56.1 1472.4,94.0 1513.0,107.0 1472.4,120.0 1491.9,157.9 1454.0,138.4 1441.0,179.0 1428.0,138.4 1390.1,157.9 1409.6,120.0 1369.0,107.0 1409.6,94.0 1390.1,56.1 1428.0,75.6" fill="#ffa80a" /></g><g transform="translate(410,82) scale(0.11876)"><path d="M120 308V92L165 38H215V308Z" fill="#dcdcdc" stroke="#5a5a5a" stroke-width="9" stroke-linejoin="round"/><polygon points="180,90 262,90 262,310 180,310" fill="#6aade4" /><polygon points="180,90 225,38 310,38 262,90" fill="#8fcbf9" /><polygon points="262,90 310,38 310,262 262,310" fill="#4890cc" /><rect x="285" y="152" width="30" height="30" fill="#eee"/><path d="M292 167H345" stroke="#222" stroke-width="10"/><path d="M335 143L375 167L335 191Z" fill="#222"/></g><g transform="translate(410,82) scale(0.11876)"><path d="M488 308V92L540 38H640Q740 50 768 150V255L712 308Z" fill="#dcdcdc" stroke="#5a5a5a" stroke-width="9" stroke-linejoin="round"/><path d="M712 205L768 150V255L712 308Z" fill="#bdbdbd" stroke="#5a5a5a" stroke-width="6" stroke-linejoin="round"/><path d="M488 92L540 38H640L595 88Z" fill="#f0f0f0"/><path d="M595 88L652 33Q745 55 768 150L712 207Q700 110 595 88Z" fill="#6aade4"/><path d="M488 92H595Q700 110 712 207" fill="none" stroke="#8a8a8a" stroke-width="6"/></g><g transform="translate(410,82) scale(0.11876)"><polygon points="865,90 1080,90 1080,308 865,308" fill="#e6e6e6" /><polygon points="865,90 925,35 1145,35 1080,90" fill="#f6f6f6" /><polygon points="1080,90 1145,35 1145,250 1080,308" fill="#bdbdbd" /><path d="M865 90L925 35H1145V250L1080 308H865Z" fill="none" stroke="#5a5a5a" stroke-width="9" stroke-linejoin="round"/><path d="M865 90H1080V308M1080 90L1145 35" fill="none" stroke="#8a8a8a" stroke-width="6"/><rect x="900" y="130" width="140" height="145" fill="#fff"/><polygon points="900,130 968,130 968,210 900,275" fill="#4590cc" /><polygon points="900,275 968,210 1040,210 1040,275" fill="#8fcbf9" /></g><g transform="translate(410,82) scale(0.11876)"><polygon points="1330,80 1475,80 1475,215 1330,215" fill="#6aade4" /><polygon points="1330,80 1375,35 1525,35 1475,80" fill="#8fcbf9" /><polygon points="1475,80 1525,35 1525,180 1475,215" fill="#4890cc" /><polygon points="1240,165 1395,165 1395,310 1240,310" fill="#6aade4" /><polygon points="1240,165 1285,120 1330,120 1330,165" fill="#8fcbf9" /><polygon points="1395,215 1432,215 1432,270 1395,310" fill="#4890cc" /><polygon points="1330,165 1395,165 1395,215 1330,215" fill="#6aade4" /></g><g transform="translate(595,82) scale(0.11876)"><path d="M78 215H275L322 170V250L275 298H78Z" fill="#dcdcdc" stroke="#777" stroke-width="7" stroke-linejoin="round"/><polygon points="275,215 322,170 322,250 275,298" fill="#bdbdbd" /><polygon points="78,85 275,85 275,165 78,165" fill="#6aade4" /><polygon points="78,85 125,35 322,35 275,85" fill="#8fcbf9" /><polygon points="275,85 322,35 322,115 275,165" fill="#4890cc" /><path d="M58 192H282L345 125" stroke="#5aaae6" stroke-width="12" fill="none"/></g><g transform="translate(595,82) scale(0.11876)"><path d="M577 85V260M490 172H665" stroke="#2e2e2e" stroke-width="24"/><path d="M577 32L617 98H537Z M577 312L617 246H537Z M438 172L505 132V212Z M716 172L649 132V212Z" fill="#2e2e2e"/></g><g transform="translate(595,82) scale(0.11876)"><path d="M912 207.5H1019.5V306H912Z" fill="#e0e0e0" stroke="#777" stroke-width="10" stroke-linejoin="round"/><path d="M1024.5 210L1057 172.5H1154.5V270L1122 306H1024.5Z" fill="#dedede" stroke="#777" stroke-width="10" stroke-linejoin="round"/><polygon points="1027,211 1058,176 1151,176 1120,211" fill="#f7f7f7" /><polygon points="1124,213 1151,180 1151,268 1124,300" fill="#c6c6c6" /><polygon points="912,102.5 1027,102.5 1027,205 912,205" fill="#6aade4" /><polygon points="912,102.5 947,67.5 1049.5,67.5 1027,102.5" fill="#8fcbf9" /><polygon points="1027,102.5 1049.5,67.5 1049.5,165 1027,192.5" fill="#4890cc" /><polygon points="1114.5,33.0 1127.5,73.6 1165.4,54.1 1145.9,92.0 1186.5,105.0 1145.9,118.0 1165.4,155.9 1127.5,136.4 1114.5,177.0 1101.5,136.4 1063.6,155.9 1083.1,118.0 1042.5,105.0 1083.1,92.0 1063.6,54.1 1101.5,73.6" fill="#ffa80a" /></g><g transform="translate(595,82) scale(0.11876)"><path d="M1309.5 285V115L1364.5 57.5Q1387 44 1414 54Q1420 58 1419.5 66V142.5Q1412 152 1392 153L1372 155V230L1322 285Z" fill="#cfcfcf" stroke="#727272" stroke-width="11" stroke-linejoin="round"/><path d="M1368 62Q1388 50 1412 59V141Q1404 147 1380 148V100Q1378 80 1368 62Z" fill="#e6e6e6"/><rect x="1440" y="132" width="50" height="104" rx="14" fill="#c6c6c6" stroke="#727272" stroke-width="11"/><path d="M1487 76L1497 67.5L1547 120V290L1534.5 292.5L1487 235Z" fill="#dedede" stroke="#727272" stroke-width="11" stroke-linejoin="round"/><path d="M1387 166V205M1464.5 102V150" stroke="#5ab0f2" stroke-width="14"/></g><g transform="translate(790,82) scale(0.11876)"><path d="M322 298V110L400 35H465L400 110V298Z" fill="#e0e0e0" stroke="#5a5a5a" stroke-width="9" stroke-linejoin="round"/><polygon points="400,110 480,35 480,220 400,298" fill="#5bc183" /><polygon points="505,110 583,35 583,220 505,298" fill="#e69a63" /></g><g transform="translate(790,82) scale(0.11876)"><path d="M1115 100V180M1352 100V180M1135 140H1332" stroke="#555" stroke-width="8" fill="none"/><path d="M1120 140L1158 120V160Z M1347 140L1309 120V160Z" fill="#555"/><rect x="1110" y="186" width="248" height="56" fill="#f9a800"/><path d="M1140 190v18M1170 190v10M1200 190v18M1230 190v10M1260 190v18M1290 190v10M1320 190v18" stroke="#b87c00" stroke-width="8"/></g><g transform="translate(975,82) scale(0.11876)"><rect x="195" y="42" width="250" height="250" fill="#8bcdff" stroke="#4a9ada" stroke-width="6"/><path d="M197 205Q250 130 285 150Q320 175 350 235Q385 190 410 205L443 250V290H197Z" fill="#3d8fcb"/><circle cx="378" cy="108" r="28" fill="#ffffc4"/></g><g transform="translate(975,82) scale(0.11876)"><rect x="820" y="40" width="237" height="182" fill="none" stroke="#4cc373" stroke-width="11" stroke-dasharray="34 22"/><path d="M1005 160V275L1035 250L1058 305L1080 295L1056 242L1092 240Z" fill="#fff" stroke="#333" stroke-width="9" stroke-linejoin="round"/></g></svg>
<div class="b" style="left:4.2px;top:150.2px;width:313px;height:25.4px;background:#f2f2f2;border:1px solid #cfcfcf;box-sizing:border-box;"></div>
<span class="t" style="left:30.60px;top:152.67px;font-size:12.5px;color:#666;transform:scaleX(0.8314);">BROWSER</span>
<div class="b" style="left:41.9px;top:181.5px;width:270.7px;height:20px;background:rgba(241,241,241,0.985);"></div>
<div class="b" style="left:67.7px;top:183.4px;width:218.2px;height:16.5px;background:#959595;"></div>
<span class="t" style="left:102.50px;top:182.19px;font-size:11px;color:#fff;font-weight:bold;transform:scaleX(1.0835);">Poultry Feeder and Unhatche...</span>
<div class="b" style="left:60.4px;top:206.5px;width:139.7px;height:20px;background:rgba(241,241,241,0.985);"></div>
<span class="t" style="left:95.00px;top:206.98px;font-size:11.3px;color:#383838;transform:scaleX(0.9751);-webkit-text-stroke:0.25px #383838;">Document Settings</span>
<div class="b" style="left:60.4px;top:231.5px;width:117.19999999999999px;height:20px;background:rgba(241,241,241,0.985);"></div>
<span class="t" style="left:95.00px;top:231.98px;font-size:11.3px;color:#383838;transform:scaleX(1.0157);-webkit-text-stroke:0.25px #383838;">Named Views</span>
<div class="b" style="left:60.4px;top:256.5px;width:99.39999999999998px;height:20px;background:rgba(241,241,241,0.985);"></div>
<span class="t" style="left:121.00px;top:256.98px;font-size:11.3px;color:#383838;transform:scaleX(0.9422);-webkit-text-stroke:0.25px #383838;">Origin</span>
<div class="b" style="left:60.4px;top:281.5px;width:104.69999999999999px;height:20px;background:rgba(241,241,241,0.985);"></div>
<span class="t" style="left:121.00px;top:281.98px;font-size:11.3px;color:#383838;transform:scaleX(0.9753);-webkit-text-stroke:0.25px #383838;">Bodies</span>
<div class="b" style="left:79.4px;top:306.5px;width:102.4px;height:20px;background:rgba(241,241,241,0.985);"></div>
<span class="t" style="left:140.00px;top:306.98px;font-size:11.3px;color:#383838;transform:scaleX(0.9800);-webkit-text-stroke:0.25px #383838;">Body5</span>
<div class="b" style="left:79.4px;top:331.5px;width:102.4px;height:20px;background:rgba(241,241,241,0.985);"></div>
<span class="t" style="left:140.00px;top:331.98px;font-size:11.3px;color:#383838;transform:scaleX(0.9800);-webkit-text-stroke:0.25px #383838;">Body6</span>
<div class="b" style="left:60.4px;top:356.5px;width:118.79999999999998px;height:20px;background:rgba(241,241,241,0.985);"></div>
<span class="t" style="left:121.00px;top:356.98px;font-size:11.3px;color:#383838;transform:scaleX(0.9940);-webkit-text-stroke:0.25px #383838;">Sketches</span>
<div class="b" style="left:79.4px;top:381.5px;width:111.0px;height:20px;background:rgba(241,241,241,0.985);"></div>
<span class="t" style="left:140.00px;top:381.98px;font-size:11.3px;color:#383838;transform:scaleX(0.9796);-webkit-text-stroke:0.25px #383838;">Sketch8</span>
<div class="b" style="left:79.4px;top:406.5px;width:111.0px;height:20px;background:rgba(241,241,241,0.985);"></div>
<span class="t" style="left:140.00px;top:406.98px;font-size:11.3px;color:#383838;transform:scaleX(0.9796);-webkit-text-stroke:0.25px #383838;">Sketch9</span>
<div class="b" style="left:79.4px;top:431.5px;width:118.9px;height:20px;background:rgba(241,241,241,0.985);"></div>
<span class="t" style="left:140.00px;top:431.98px;font-size:11.3px;color:#383838;transform:scaleX(0.9827);-webkit-text-stroke:0.25px #383838;">Sketch10</span>
<div class="b" style="left:79.4px;top:456.5px;width:117.19999999999999px;height:20px;background:rgba(241,241,241,0.985);"></div>
<span class="t" style="left:140.00px;top:456.98px;font-size:11.3px;color:#383838;transform:scaleX(0.9638);-webkit-text-stroke:0.25px #383838;">Sketch11</span>
<div class="b" style="left:79.4px;top:481.5px;width:118.9px;height:20px;background:rgba(241,241,241,0.985);"></div>
<span class="t" style="left:140.00px;top:481.98px;font-size:11.3px;color:#383838;transform:scaleX(0.9827);-webkit-text-stroke:0.25px #383838;">Sketch12</span>
<div class="b" style="left:79.4px;top:506.5px;width:118.9px;height:20px;background:rgba(241,241,241,0.985);"></div>
<span class="t" style="left:140.00px;top:506.98px;font-size:11.3px;color:#383838;transform:scaleX(0.9827);-webkit-text-stroke:0.25px #383838;">Sketch13</span>
<div class="b" style="left:79.4px;top:531.5px;width:118.9px;height:20px;background:rgba(241,241,241,0.985);"></div>
<span class="t" style="left:140.00px;top:531.98px;font-size:11.3px;color:#383838;transform:scaleX(0.9827);-webkit-text-stroke:0.25px #383838;">Sketch14</span>
<div class="b" style="left:79.4px;top:556.5px;width:118.9px;height:20px;background:rgba(241,241,241,0.985);"></div>
<span class="t" style="left:140.00px;top:556.98px;font-size:11.3px;color:#383838;transform:scaleX(0.9827);-webkit-text-stroke:0.25px #383838;">Sketch15</span>
<div class="b" style="left:79.4px;top:581.5px;width:118.9px;height:20px;background:rgba(241,241,241,0.985);"></div>
<span class="t" style="left:140.00px;top:581.98px;font-size:11.3px;color:#383838;transform:scaleX(0.9827);-webkit-text-stroke:0.25px #383838;">Sketch16</span>
<div class="b" style="left:79.4px;top:606.5px;width:118.9px;height:20px;background:rgba(241,241,241,0.985);"></div>
<span class="t" style="left:140.00px;top:606.98px;font-size:11.3px;color:#383838;transform:scaleX(0.9827);-webkit-text-stroke:0.25px #383838;">Sketch17</span>
<div class="b" style="left:79.4px;top:631.5px;width:118.9px;height:20px;background:rgba(241,241,241,0.985);"></div>
<span class="t" style="left:140.00px;top:631.98px;font-size:11.3px;color:#383838;transform:scaleX(0.9827);-webkit-text-stroke:0.25px #383838;">Sketch18</span>
<div class="b" style="left:79.4px;top:656.5px;width:118.9px;height:20px;background:rgba(241,241,241,0.985);"></div>
<span class="t" style="left:140.00px;top:656.98px;font-size:11.3px;color:#383838;transform:scaleX(0.9827);-webkit-text-stroke:0.25px #383838;">Sketch19</span>
<div class="b" style="left:60.4px;top:681.5px;width:135.89999999999998px;height:20px;background:rgba(241,241,241,0.985);"></div>
<span class="t" style="left:121.00px;top:681.98px;font-size:11.3px;color:#383838;transform:scaleX(0.9978);-webkit-text-stroke:0.25px #383838;">Construction</span>
<div class="b" style="left:60.4px;top:706.5px;width:118.19999999999999px;height:20px;background:rgba(241,241,241,0.985);"></div>
<span class="t" style="left:121.00px;top:706.98px;font-size:11.3px;color:#383838;transform:scaleX(0.9680);-webkit-text-stroke:0.25px #383838;">camera:1</span>
<div class="b" style="left:79.4px;top:731.5px;width:99.4px;height:20px;background:rgba(241,241,241,0.985);"></div>
<span class="t" style="left:140.00px;top:731.98px;font-size:11.3px;color:#383838;transform:scaleX(0.9422);-webkit-text-stroke:0.25px #383838;">Origin</span>
<div class="b" style="left:4.2px;top:768px;width:313px;height:25.4px;background:#f2f2f2;border:1px solid #cfcfcf;border-top-color:#e6e6e6;box-sizing:border-box;"></div>
<span class="t" style="left:30.60px;top:770.97px;font-size:12.5px;color:#666;transform:scaleX(0.8119);">COMMENTS</span>
<svg class="b" style="left:0;top:0" width="330" height="800" viewBox="0 0 330 800"><path d="M14.8 160.4L9.5 163.7L14.8 167ZM20 160.4L14.7 163.7L20 167Z" fill="#2e2e2e"/><circle cx="299.4" cy="163" r="4.7" fill="#2c2c2c"/><rect x="296.7" y="162.3" width="5.4" height="1.4" fill="#d4d4d4"/><rect x="311.3" y="157.2" width="1.3" height="11.7" fill="#a8a8a8"/><rect x="312.6" y="159" width="2.2" height="8.4" fill="#bcbcbc"/><rect x="8.8" y="182" width="5" height="431" fill="#a2a2a2"/><rect x="8.8" y="613" width="5" height="130" fill="#c4c4c4"/><defs><linearGradient id="to191" x1="0" y1="1" x2="1" y2="0"><stop offset="0" stop-color="#c2c2c2"/><stop offset="0.55" stop-color="#777"/><stop offset="1" stop-color="#3a3a3a"/></linearGradient></defs><path d="M22 196.9H33.2V185.7Z" fill="url(#to191)" stroke="#2a2a2a" stroke-width="1" stroke-linejoin="round"/><g transform="translate(45,191.8)"><path d="M0 0Q8.2 -10.4 16.4 0Q8.2 10.4 0 0Z" fill="#9b9b9b"/><circle cx="8.2" cy="0" r="3.6" fill="#f2f2f2"/><circle cx="8.2" cy="0" r="2.1" fill="#9b9b9b"/></g><g transform="translate(70.6,191.5)" stroke-linejoin="round"><path d="M1.3 7.4V-4.1L3.5 -7.6H9.5V-1L7 1.8V7.4Z" fill="#f3f4f6" stroke="#676b75" stroke-width="1.2"/><path d="M1.3 -4.1L3.5 -7.6H9.5L7 -4.1Z" fill="#fff"/><path d="M7 -4.1L9.5 -7.6V-1L7 1.8Z" fill="#dde0e5"/><path d="M7.9 7.4V1.8L10.4 -1.3H16.3V4.6L13.5 7.4Z" fill="#f3f4f6" stroke="#676b75" stroke-width="1.2"/><path d="M7.9 1.8L10.4 -1.3H16.3L13.5 1.8Z" fill="#fff"/><path d="M13.5 1.8L16.3 -1.3V4.6L13.5 7.4Z" fill="#dde0e5"/><path d="M1.3 -4.1H7V1.8M7.9 1.8H13.5V7.4" fill="none" stroke="#a9adb5" stroke-width="0.7"/></g><circle cx="297.2" cy="191.9" r="6.1" fill="#fff" stroke="#3a3a3a" stroke-width="1.3"/><circle cx="297.2" cy="191.9" r="2.6" fill="#222"/><path d="M41.9 210.60000000000002L50.5 216.8L41.9 223.0Z" fill="#e3e5e9" stroke="#3a3a3a" stroke-width="1.5" stroke-linejoin="round"/><g transform="translate(71.8,216.8)" fill="#9b9b9b"><rect x="-1.9" y="-8.1" width="3.8" height="4" transform="rotate(0)"/><rect x="-1.9" y="-8.1" width="3.8" height="4" transform="rotate(45)"/><rect x="-1.9" y="-8.1" width="3.8" height="4" transform="rotate(90)"/><rect x="-1.9" y="-8.1" width="3.8" height="4" transform="rotate(135)"/><rect x="-1.9" y="-8.1" width="3.8" height="4" transform="rotate(180)"/><rect x="-1.9" y="-8.1" width="3.8" height="4" transform="rotate(225)"/><rect x="-1.9" y="-8.1" width="3.8" height="4" transform="rotate(270)"/><rect x="-1.9" y="-8.1" width="3.8" height="4" transform="rotate(315)"/><circle r="6" /><circle r="2.7" fill="#f2f2f2"/></g><path d="M41.9 235.60000000000002L50.5 241.8L41.9 248.0Z" fill="#e3e5e9" stroke="#3a3a3a" stroke-width="1.5" stroke-linejoin="round"/><path transform="translate(63.49999999999999,241.6)" d="M0 -6.5H6.6L7.6 -4.7H16.4V6.6H0Z" fill="#9b9b9b"/><path transform="translate(63.49999999999999,241.6)" d="M0.8 -4.4H6.8" stroke="#c6c6c6" stroke-width="0.9"/><path d="M41.9 260.6L50.5 266.8L41.9 273.0Z" fill="#e3e5e9" stroke="#3a3a3a" stroke-width="1.5" stroke-linejoin="round"/><g transform="translate(63.4,266.5)" fill="none" stroke="#b2b2b2" stroke-width="1.05"><path d="M0.3 0Q8.2 -9.4 16.2 0Q8.2 9.4 0.3 0Z"/><circle cx="8.2" cy="0" r="3"/><path d="M6.6 0.2Q6.8 -1.6 8.6 -1.7"/><path d="M3 -6L13.6 5.8" stroke="#f1f1f1" stroke-width="2.6"/><path d="M2.6 -6.4L14 6.2" stroke="#a6a6a6" stroke-width="1.1"/></g><path transform="translate(89.49999999999999,266.6)" d="M0 -6.5H6.6L7.6 -4.7H16.4V6.6H0Z" fill="#9b9b9b"/><path transform="translate(89.49999999999999,266.6)" d="M0.8 -4.4H6.8" stroke="#c6c6c6" stroke-width="0.9"/><defs><linearGradient id="to291" x1="0" y1="1" x2="1" y2="0"><stop offset="0" stop-color="#c2c2c2"/><stop offset="0.55" stop-color="#777"/><stop offset="1" stop-color="#3a3a3a"/></linearGradient></defs><path d="M40.699999999999996 296.9H51.89999999999999V285.7Z" fill="url(#to291)" stroke="#2a2a2a" stroke-width="1" stroke-linejoin="round"/><g transform="translate(63.699999999999996,291.8)"><path d="M0 0Q8.2 -10.4 16.4 0Q8.2 10.4 0 0Z" fill="#9b9b9b"/><circle cx="8.2" cy="0" r="3.6" fill="#f2f2f2"/><circle cx="8.2" cy="0" r="2.1" fill="#9b9b9b"/></g><path transform="translate(89.49999999999999,291.6)" d="M0 -6.5H6.6L7.6 -4.7H16.4V6.6H0Z" fill="#9b9b9b"/><path transform="translate(89.49999999999999,291.6)" d="M0.8 -4.4H6.8" stroke="#c6c6c6" stroke-width="0.9"/><g transform="translate(82.4,316.5)" fill="none" stroke="#b2b2b2" stroke-width="1.05"><path d="M0.3 0Q8.2 -9.4 16.2 0Q8.2 9.4 0.3 0Z"/><circle cx="8.2" cy="0" r="3"/><path d="M6.6 0.2Q6.8 -1.6 8.6 -1.7"/><path d="M3 -6L13.6 5.8" stroke="#f1f1f1" stroke-width="2.6"/><path d="M2.6 -6.4L14 6.2" stroke="#a6a6a6" stroke-width="1.1"/></g><g transform="translate(107.60000000000001,316.5)"><defs><linearGradient id="bg316" x1="0" y1="0" x2="1" y2="0"><stop offset="0" stop-color="#c9ccd2"/><stop offset="1" stop-color="#f4f5f7"/></linearGradient></defs><rect x="1.4" y="-7.7" width="15.6" height="15.6" rx="4.4" fill="#fff" stroke="#686c76" stroke-width="1.3"/><path d="M5.6 -1.6H12.8V6.4Q9.2 7.4 5.6 6.4Z" fill="url(#bg316)"/></g><g transform="translate(82.4,341.5)" fill="none" stroke="#b2b2b2" stroke-width="1.05"><path d="M0.3 0Q8.2 -9.4 16.2 0Q8.2 9.4 0.3 0Z"/><circle cx="8.2" cy="0" r="3"/><path d="M6.6 0.2Q6.8 -1.6 8.6 -1.7"/><path d="M3 -6L13.6 5.8" stroke="#f1f1f1" stroke-width="2.6"/><path d="M2.6 -6.4L14 6.2" stroke="#a6a6a6" stroke-width="1.1"/></g><g transform="translate(107.60000000000001,341.5)"><defs><linearGradient id="bg341" x1="0" y1="0" x2="1" y2="0"><stop offset="0" stop-color="#c9ccd2"/><stop offset="1" stop-color="#f4f5f7"/></linearGradient></defs><rect x="1.4" y="-7.7" width="15.6" height="15.6" rx="4.4" fill="#fff" stroke="#686c76" stroke-width="1.3"/><path d="M5.6 -1.6H12.8V6.4Q9.2 7.4 5.6 6.4Z" fill="url(#bg341)"/></g><defs><linearGradient id="to366" x1="0" y1="1" x2="1" y2="0"><stop offset="0" stop-color="#c2c2c2"/><stop offset="0.55" stop-color="#777"/><stop offset="1" stop-color="#3a3a3a"/></linearGradient></defs><path d="M40.699999999999996 371.9H51.89999999999999V360.7Z" fill="url(#to366)" stroke="#2a2a2a" stroke-width="1" stroke-linejoin="round"/><g transform="translate(63.699999999999996,366.8)"><path d="M0 0Q8.2 -10.4 16.4 0Q8.2 10.4 0 0Z" fill="#9b9b9b"/><circle cx="8.2" cy="0" r="3.6" fill="#f2f2f2"/><circle cx="8.2" cy="0" r="2.1" fill="#9b9b9b"/></g><path transform="translate(89.49999999999999,366.6)" d="M0 -6.5H6.6L7.6 -4.7H16.4V6.6H0Z" fill="#9b9b9b"/><path transform="translate(89.49999999999999,366.6)" d="M0.8 -4.4H6.8" stroke="#c6c6c6" stroke-width="0.9"/><g transform="translate(82.4,391.5)" fill="none" stroke="#b2b2b2" stroke-width="1.05"><path d="M0.3 0Q8.2 -9.4 16.2 0Q8.2 9.4 0.3 0Z"/><circle cx="8.2" cy="0" r="3"/><path d="M6.6 0.2Q6.8 -1.6 8.6 -1.7"/><path d="M3 -6L13.6 5.8" stroke="#f1f1f1" stroke-width="2.6"/><path d="M2.6 -6.4L14 6.2" stroke="#a6a6a6" stroke-width="1.1"/></g><g transform="translate(108.10000000000001,391.5)"><path d="M3.4 -6.7H11.6M1.2 -4.6V4.6M14.2 -4.6V-0.8M3.4 6.7H7.2" stroke="#8a8a8a" stroke-width="1.3" fill="none"/><rect x="-0.09999999999999998" y="-8.2" width="2.1" height="2.1" fill="#2e2e2e"/><rect x="13.3" y="-8.2" width="2.1" height="2.1" fill="#2e2e2e"/><rect x="-0.09999999999999998" y="5.7" width="2.1" height="2.1" fill="#2e2e2e"/><path d="M11.2 3.6V2.2Q11.3 0 13.3 0Q15.3 0 15.4 2.2V3.6" fill="none" stroke="#cf3f43" stroke-width="1.3"/><rect x="9.6" y="3.3" width="7.5" height="5" rx="0.6" fill="#cf3f43"/><rect x="11.3" y="4.9" width="4.1" height="1.9" fill="#e58f92"/></g><g transform="translate(82.4,416.5)" fill="none" stroke="#b2b2b2" stroke-width="1.05"><path d="M0.3 0Q8.2 -9.4 16.2 0Q8.2 9.4 0.3 0Z"/><circle cx="8.2" cy="0" r="3"/><path d="M6.6 0.2Q6.8 -1.6 8.6 -1.7"/><path d="M3 -6L13.6 5.8" stroke="#f1f1f1" stroke-width="2.6"/><path d="M2.6 -6.4L14 6.2" stroke="#a6a6a6" stroke-width="1.1"/></g><g transform="translate(108.10000000000001,416.5)"><path d="M3.4 -6.7H11.6M1.2 -4.6V4.6M14.2 -4.6V-0.8M3.4 6.7H7.2" stroke="#8a8a8a" stroke-width="1.3" fill="none"/><rect x="-0.09999999999999998" y="-8.2" width="2.1" height="2.1" fill="#2e2e2e"/><rect x="13.3" y="-8.2" width="2.1" height="2.1" fill="#2e2e2e"/><rect x="-0.09999999999999998" y="5.7" width="2.1" height="2.1" fill="#2e2e2e"/><path d="M11.2 3.6V2.2Q11.3 0 13.3 0Q15.3 0 15.4 2.2V3.6" fill="none" stroke="#cf3f43" stroke-width="1.3"/><rect x="9.6" y="3.3" width="7.5" height="5" rx="0.6" fill="#cf3f43"/><rect x="11.3" y="4.9" width="4.1" height="1.9" fill="#e58f92"/></g><g transform="translate(82.4,441.5)" fill="none" stroke="#b2b2b2" stroke-width="1.05"><path d="M0.3 0Q8.2 -9.4 16.2 0Q8.2 9.4 0.3 0Z"/><circle cx="8.2" cy="0" r="3"/><path d="M6.6 0.2Q6.8 -1.6 8.6 -1.7"/><path d="M3 -6L13.6 5.8" stroke="#f1f1f1" stroke-width="2.6"/><path d="M2.6 -6.4L14 6.2" stroke="#a6a6a6" stroke-width="1.1"/></g><g transform="translate(108.10000000000001,441.5)"><path d="M3.4 -6.7H11.6M1.2 -4.6V4.6M14.2 -4.6V-0.8M3.4 6.7H7.2" stroke="#8a8a8a" stroke-width="1.3" fill="none"/><rect x="-0.09999999999999998" y="-8.2" width="2.1" height="2.1" fill="#2e2e2e"/><rect x="13.3" y="-8.2" width="2.1" height="2.1" fill="#2e2e2e"/><rect x="-0.09999999999999998" y="5.7" width="2.1" height="2.1" fill="#2e2e2e"/><path d="M11.2 3.6V2.2Q11.3 0 13.3 0Q15.3 0 15.4 2.2V3.6" fill="none" stroke="#cf3f43" stroke-width="1.3"/><rect x="9.6" y="3.3" width="7.5" height="5" rx="0.6" fill="#cf3f43"/><rect x="11.3" y="4.9" width="4.1" height="1.9" fill="#e58f92"/></g><g transform="translate(82.4,466.5)" fill="none" stroke="#b2b2b2" stroke-width="1.05"><path d="M0.3 0Q8.2 -9.4 16.2 0Q8.2 9.4 0.3 0Z"/><circle cx="8.2" cy="0" r="3"/><path d="M6.6 0.2Q6.8 -1.6 8.6 -1.7"/><path d="M3 -6L13.6 5.8" stroke="#f1f1f1" stroke-width="2.6"/><path d="M2.6 -6.4L14 6.2" stroke="#a6a6a6" stroke-width="1.1"/></g><g transform="translate(108.10000000000001,466.5)"><path d="M3.4 -6.7H11.6M1.2 -4.6V4.6M14.2 -4.6V-0.8M3.4 6.7H7.2" stroke="#8a8a8a" stroke-width="1.3" fill="none"/><rect x="-0.09999999999999998" y="-8.2" width="2.1" height="2.1" fill="#2e2e2e"/><rect x="13.3" y="-8.2" width="2.1" height="2.1" fill="#2e2e2e"/><rect x="-0.09999999999999998" y="5.7" width="2.1" height="2.1" fill="#2e2e2e"/><path d="M11.2 3.6V2.2Q11.3 0 13.3 0Q15.3 0 15.4 2.2V3.6" fill="none" stroke="#cf3f43" stroke-width="1.3"/><rect x="9.6" y="3.3" width="7.5" height="5" rx="0.6" fill="#cf3f43"/><rect x="11.3" y="4.9" width="4.1" height="1.9" fill="#e58f92"/></g><g transform="translate(82.4,491.5)" fill="none" stroke="#b2b2b2" stroke-width="1.05"><path d="M0.3 0Q8.2 -9.4 16.2 0Q8.2 9.4 0.3 0Z"/><circle cx="8.2" cy="0" r="3"/><path d="M6.6 0.2Q6.8 -1.6 8.6 -1.7"/><path d="M3 -6L13.6 5.8" stroke="#f1f1f1" stroke-width="2.6"/><path d="M2.6 -6.4L14 6.2" stroke="#a6a6a6" stroke-width="1.1"/></g><g transform="translate(108.10000000000001,491.5)"><path d="M3.4 -6.7H11.6M1.2 -4.6V4.6M14.2 -4.6V-0.8M3.4 6.7H7.2" stroke="#8a8a8a" stroke-width="1.3" fill="none"/><rect x="-0.09999999999999998" y="-8.2" width="2.1" height="2.1" fill="#2a8ff0"/><rect x="13.3" y="-8.2" width="2.1" height="2.1" fill="#2a8ff0"/><rect x="-0.09999999999999998" y="5.7" width="2.1" height="2.1" fill="#2a8ff0"/><path d="M9.6 6.4L14.4 1.6L16.2 3.4L11.4 8.2Z" fill="#f4b325"/><path d="M14.4 1.6L15.5 0.5Q16.4 -0.1 17.1 0.7Q17.9 1.6 17.2 2.4L16.2 3.4Z" fill="#f0474c"/><path d="M9.6 6.4L11.4 8.2L8.6 9.2Z" fill="#555"/></g><g transform="translate(82.4,516.5)" fill="none" stroke="#b2b2b2" stroke-width="1.05"><path d="M0.3 0Q8.2 -9.4 16.2 0Q8.2 9.4 0.3 0Z"/><circle cx="8.2" cy="0" r="3"/><path d="M6.6 0.2Q6.8 -1.6 8.6 -1.7"/><path d="M3 -6L13.6 5.8" stroke="#f1f1f1" stroke-width="2.6"/><path d="M2.6 -6.4L14 6.2" stroke="#a6a6a6" stroke-width="1.1"/></g><g transform="translate(108.10000000000001,516.5)"><path d="M3.4 -6.7H11.6M1.2 -4.6V4.6M14.2 -4.6V-0.8M3.4 6.7H7.2" stroke="#8a8a8a" stroke-width="1.3" fill="none"/><rect x="-0.09999999999999998" y="-8.2" width="2.1" height="2.1" fill="#2e2e2e"/><rect x="13.3" y="-8.2" width="2.1" height="2.1" fill="#2e2e2e"/><rect x="-0.09999999999999998" y="5.7" width="2.1" height="2.1" fill="#2e2e2e"/><path d="M11.2 3.6V2.2Q11.3 0 13.3 0Q15.3 0 15.4 2.2V3.6" fill="none" stroke="#cf3f43" stroke-width="1.3"/><rect x="9.6" y="3.3" width="7.5" height="5" rx="0.6" fill="#cf3f43"/><rect x="11.3" y="4.9" width="4.1" height="1.9" fill="#e58f92"/></g><g transform="translate(82.4,541.5)" fill="none" stroke="#b2b2b2" stroke-width="1.05"><path d="M0.3 0Q8.2 -9.4 16.2 0Q8.2 9.4 0.3 0Z"/><circle cx="8.2" cy="0" r="3"/><path d="M6.6 0.2Q6.8 -1.6 8.6 -1.7"/><path d="M3 -6L13.6 5.8" stroke="#f1f1f1" stroke-width="2.6"/><path d="M2.6 -6.4L14 6.2" stroke="#a6a6a6" stroke-width="1.1"/></g><g transform="translate(108.10000000000001,541.5)"><path d="M3.4 -6.7H11.6M1.2 -4.6V4.6M14.2 -4.6V-0.8M3.4 6.7H7.2" stroke="#8a8a8a" stroke-width="1.3" fill="none"/><rect x="-0.09999999999999998" y="-8.2" width="2.1" height="2.1" fill="#2e2e2e"/><rect x="13.3" y="-8.2" width="2.1" height="2.1" fill="#2e2e2e"/><rect x="-0.09999999999999998" y="5.7" width="2.1" height="2.1" fill="#2e2e2e"/><path d="M11.2 3.6V2.2Q11.3 0 13.3 0Q15.3 0 15.4 2.2V3.6" fill="none" stroke="#cf3f43" stroke-width="1.3"/><rect x="9.6" y="3.3" width="7.5" height="5" rx="0.6" fill="#cf3f43"/><rect x="11.3" y="4.9" width="4.1" height="1.9" fill="#e58f92"/></g><g transform="translate(82.4,566.5)" fill="none" stroke="#b2b2b2" stroke-width="1.05"><path d="M0.3 0Q8.2 -9.4 16.2 0Q8.2 9.4 0.3 0Z"/><circle cx="8.2" cy="0" r="3"/><path d="M6.6 0.2Q6.8 -1.6 8.6 -1.7"/><path d="M3 -6L13.6 5.8" stroke="#f1f1f1" stroke-width="2.6"/><path d="M2.6 -6.4L14 6.2" stroke="#a6a6a6" stroke-width="1.1"/></g><g transform="translate(108.10000000000001,566.5)"><path d="M3.4 -6.7H11.6M1.2 -4.6V4.6M14.2 -4.6V-0.8M3.4 6.7H7.2" stroke="#8a8a8a" stroke-width="1.3" fill="none"/><rect x="-0.09999999999999998" y="-8.2" width="2.1" height="2.1" fill="#2e2e2e"/><rect x="13.3" y="-8.2" width="2.1" height="2.1" fill="#2e2e2e"/><rect x="-0.09999999999999998" y="5.7" width="2.1" height="2.1" fill="#2e2e2e"/><path d="M11.2 3.6V2.2Q11.3 0 13.3 0Q15.3 0 15.4 2.2V3.6" fill="none" stroke="#cf3f43" stroke-width="1.3"/><rect x="9.6" y="3.3" width="7.5" height="5" rx="0.6" fill="#cf3f43"/><rect x="11.3" y="4.9" width="4.1" height="1.9" fill="#e58f92"/></g><g transform="translate(82.4,591.5)" fill="none" stroke="#b2b2b2" stroke-width="1.05"><path d="M0.3 0Q8.2 -9.4 16.2 0Q8.2 9.4 0.3 0Z"/><circle cx="8.2" cy="0" r="3"/><path d="M6.6 0.2Q6.8 -1.6 8.6 -1.7"/><path d="M3 -6L13.6 5.8" stroke="#f1f1f1" stroke-width="2.6"/><path d="M2.6 -6.4L14 6.2" stroke="#a6a6a6" stroke-width="1.1"/></g><g transform="translate(108.10000000000001,591.5)"><path d="M3.4 -6.7H11.6M1.2 -4.6V4.6M14.2 -4.6V-0.8M3.4 6.7H7.2" stroke="#8a8a8a" stroke-width="1.3" fill="none"/><rect x="-0.09999999999999998" y="-8.2" width="2.1" height="2.1" fill="#2e2e2e"/><rect x="13.3" y="-8.2" width="2.1" height="2.1" fill="#2e2e2e"/><rect x="-0.09999999999999998" y="5.7" width="2.1" height="2.1" fill="#2e2e2e"/><path d="M11.2 3.6V2.2Q11.3 0 13.3 0Q15.3 0 15.4 2.2V3.6" fill="none" stroke="#cf3f43" stroke-width="1.3"/><rect x="9.6" y="3.3" width="7.5" height="5" rx="0.6" fill="#cf3f43"/><rect x="11.3" y="4.9" width="4.1" height="1.9" fill="#e58f92"/></g><g transform="translate(82.4,616.5)" fill="none" stroke="#b2b2b2" stroke-width="1.05"><path d="M0.3 0Q8.2 -9.4 16.2 0Q8.2 9.4 0.3 0Z"/><circle cx="8.2" cy="0" r="3"/><path d="M6.6 0.2Q6.8 -1.6 8.6 -1.7"/><path d="M3 -6L13.6 5.8" stroke="#f1f1f1" stroke-width="2.6"/><path d="M2.6 -6.4L14 6.2" stroke="#a6a6a6" stroke-width="1.1"/></g><g transform="translate(108.10000000000001,616.5)"><path d="M3.4 -6.7H11.6M1.2 -4.6V4.6M14.2 -4.6V-0.8M3.4 6.7H7.2" stroke="#8a8a8a" stroke-width="1.3" fill="none"/><rect x="-0.09999999999999998" y="-8.2" width="2.1" height="2.1" fill="#2e2e2e"/><rect x="13.3" y="-8.2" width="2.1" height="2.1" fill="#2e2e2e"/><rect x="-0.09999999999999998" y="5.7" width="2.1" height="2.1" fill="#2e2e2e"/><path d="M11.2 3.6V2.2Q11.3 0 13.3 0Q15.3 0 15.4 2.2V3.6" fill="none" stroke="#cf3f43" stroke-width="1.3"/><rect x="9.6" y="3.3" width="7.5" height="5" rx="0.6" fill="#cf3f43"/><rect x="11.3" y="4.9" width="4.1" height="1.9" fill="#e58f92"/></g><g transform="translate(82.4,641.5)" fill="none" stroke="#b2b2b2" stroke-width="1.05"><path d="M0.3 0Q8.2 -9.4 16.2 0Q8.2 9.4 0.3 0Z"/><circle cx="8.2" cy="0" r="3"/><path d="M6.6 0.2Q6.8 -1.6 8.6 -1.7"/><path d="M3 -6L13.6 5.8" stroke="#f1f1f1" stroke-width="2.6"/><path d="M2.6 -6.4L14 6.2" stroke="#a6a6a6" stroke-width="1.1"/></g><g transform="translate(108.10000000000001,641.5)"><path d="M3.4 -6.7H11.6M1.2 -4.6V4.6M14.2 -4.6V-0.8M3.4 6.7H7.2" stroke="#8a8a8a" stroke-width="1.3" fill="none"/><rect x="-0.09999999999999998" y="-8.2" width="2.1" height="2.1" fill="#2e2e2e"/><rect x="13.3" y="-8.2" width="2.1" height="2.1" fill="#2e2e2e"/><rect x="-0.09999999999999998" y="5.7" width="2.1" height="2.1" fill="#2e2e2e"/><path d="M11.2 3.6V2.2Q11.3 0 13.3 0Q15.3 0 15.4 2.2V3.6" fill="none" stroke="#cf3f43" stroke-width="1.3"/><rect x="9.6" y="3.3" width="7.5" height="5" rx="0.6" fill="#cf3f43"/><rect x="11.3" y="4.9" width="4.1" height="1.9" fill="#e58f92"/></g><g transform="translate(82.4,666.5)" fill="none" stroke="#b2b2b2" stroke-width="1.05"><path d="M0.3 0Q8.2 -9.4 16.2 0Q8.2 9.4 0.3 0Z"/><circle cx="8.2" cy="0" r="3"/><path d="M6.6 0.2Q6.8 -1.6 8.6 -1.7"/><path d="M3 -6L13.6 5.8" stroke="#f1f1f1" stroke-width="2.6"/><path d="M2.6 -6.4L14 6.2" stroke="#a6a6a6" stroke-width="1.1"/></g><g transform="translate(108.10000000000001,666.5)"><path d="M3.4 -6.7H11.6M1.2 -4.6V4.6M14.2 -4.6V-0.8M3.4 6.7H7.2" stroke="#8a8a8a" stroke-width="1.3" fill="none"/><rect x="-0.09999999999999998" y="-8.2" width="2.1" height="2.1" fill="#2e2e2e"/><rect x="13.3" y="-8.2" width="2.1" height="2.1" fill="#2e2e2e"/><rect x="-0.09999999999999998" y="5.7" width="2.1" height="2.1" fill="#2e2e2e"/><path d="M11.2 3.6V2.2Q11.3 0 13.3 0Q15.3 0 15.4 2.2V3.6" fill="none" stroke="#cf3f43" stroke-width="1.3"/><rect x="9.6" y="3.3" width="7.5" height="5" rx="0.6" fill="#cf3f43"/><rect x="11.3" y="4.9" width="4.1" height="1.9" fill="#e58f92"/></g><path d="M41.9 685.5999999999999L50.5 691.8L41.9 698.0Z" fill="#e3e5e9" stroke="#3a3a3a" stroke-width="1.5" stroke-linejoin="round"/><g transform="translate(63.699999999999996,691.8)"><path d="M0 0Q8.2 -10.4 16.4 0Q8.2 10.4 0 0Z" fill="#9b9b9b"/><circle cx="8.2" cy="0" r="3.6" fill="#f2f2f2"/><circle cx="8.2" cy="0" r="2.1" fill="#9b9b9b"/></g><path transform="translate(89.49999999999999,691.6)" d="M0 -6.5H6.6L7.6 -4.7H16.4V6.6H0Z" fill="#9b9b9b"/><path transform="translate(89.49999999999999,691.6)" d="M0.8 -4.4H6.8" stroke="#c6c6c6" stroke-width="0.9"/><defs><linearGradient id="to716" x1="0" y1="1" x2="1" y2="0"><stop offset="0" stop-color="#c2c2c2"/><stop offset="0.55" stop-color="#777"/><stop offset="1" stop-color="#3a3a3a"/></linearGradient></defs><path d="M40.699999999999996 721.9H51.89999999999999V710.7Z" fill="url(#to716)" stroke="#2a2a2a" stroke-width="1" stroke-linejoin="round"/><g transform="translate(63.699999999999996,716.8)"><path d="M0 0Q8.2 -10.4 16.4 0Q8.2 10.4 0 0Z" fill="#9b9b9b"/><circle cx="8.2" cy="0" r="3.6" fill="#f2f2f2"/><circle cx="8.2" cy="0" r="2.1" fill="#9b9b9b"/></g><g transform="translate(89.1,716.5)"><path d="M1 -4.2L4.4 -7.6H14.4Q16 -7.6 16 -6V3.8L12.6 7.6H2.4Q1 7.6 1 6.2Z" fill="#fafafa" stroke="#646a76" stroke-width="1.3" stroke-linejoin="round"/><path d="M1.8 -3.4H12V6.8H2.4Q1.8 6.8 1.8 6.2Z" fill="#e3e5ea"/><path d="M12.6 -3.6L15.2 -6.4V3.6L12.6 6.6Z" fill="#d4d7de"/></g><path d="M60.8 735.5999999999999L69.39999999999999 741.8L60.8 748.0Z" fill="#e3e5e9" stroke="#3a3a3a" stroke-width="1.5" stroke-linejoin="round"/><g transform="translate(82.4,741.5)" fill="none" stroke="#b2b2b2" stroke-width="1.05"><path d="M0.3 0Q8.2 -9.4 16.2 0Q8.2 9.4 0.3 0Z"/><circle cx="8.2" cy="0" r="3"/><path d="M6.6 0.2Q6.8 -1.6 8.6 -1.7"/><path d="M3 -6L13.6 5.8" stroke="#f1f1f1" stroke-width="2.6"/><path d="M2.6 -6.4L14 6.2" stroke="#a6a6a6" stroke-width="1.1"/></g><path transform="translate(108.5,741.6)" d="M0 -6.5H6.6L7.6 -4.7H16.4V6.6H0Z" fill="#9b9b9b"/><path transform="translate(108.5,741.6)" d="M0.8 -4.4H6.8" stroke="#c6c6c6" stroke-width="0.9"/><circle cx="299.4" cy="780.7" r="4.7" fill="#2c2c2c"/><rect x="296.7" y="780" width="5.4" height="1.4" fill="#e0e0e0"/><rect x="298.7" y="778" width="1.4" height="5.4" fill="#e0e0e0"/><rect x="311.3" y="774.6" width="1.3" height="11.7" fill="#a8a8a8"/><rect x="312.6" y="776.4" width="2.2" height="8.4" fill="#bcbcbc"/></svg>
<div class="b" style="left:676.2px;top:770.2px;width:246px;height:23.8px;background:rgba(240,240,240,0.96);"></div>
<div class="b" style="left:737px;top:769.6px;width:27.3px;height:24.9px;background:#0a96d8;"></div>
<svg class="b" style="left:0;top:0" width="1600" height="800" viewBox="0 0 1600 800"><path d="M685.2 780.6A8.1 3.4 0 1 1 683 786.3" fill="none" stroke="#3a3a3a" stroke-width="1.35"/><path d="M678.8 785.4L683.6 783.2L684 788.4Z" fill="#2e2e2e"/><path d="M687.8 773.6L690.6 777.4H688.9V790.4H686.7V777.4H685Z" fill="#fff" stroke="#555" stroke-width="0.9"/><path d="M689.4 786.6A8.1 3.4 0 0 1 683 786.3" fill="none" stroke="#3a3a3a" stroke-width="1.35"/><path d="M701 779.8h5.9l-2.95 4z" fill="#2e2e2e"/><path d="M714 779.2L719.2 774.4L720.4 777.4L727.2 774.8V779.2Z" fill="#8c8c8c" stroke="#666" stroke-width="0.8"/><rect x="713.8" y="779.2" width="16" height="11" rx="1" fill="#fff" stroke="#55585e" stroke-width="1.5"/><rect x="717.2" y="782.3" width="9.3" height="4.8" fill="#a9adb9" stroke="#555a66" stroke-width="1"/><path d="M745.6 789.8Q743.4 786.4 740.8 783.4Q740.4 782.2 741.6 782Q743 782 744.6 784L745.2 784.2L743.6 777.4Q743.6 776.2 744.6 776.2Q745.4 776.2 745.8 777.2L747.2 781.4L747 775.2Q747.2 774.2 748.1 774.2Q749 774.2 749.2 775.2L749.8 781.2L750.8 775.6Q751.2 774.8 752 774.9Q752.8 775.1 752.8 776L752.4 781.8L754.4 778.2Q755 777.5 755.7 777.9Q756.4 778.4 756.1 779.2L753.8 785.2Q753.4 788 752.2 789.8Z" fill="#fff" stroke="#6a7a8a" stroke-width="0.7" stroke-linejoin="round"/><path d="M776 784L780 788" stroke="#3a3a3a" stroke-width="2.6" stroke-linecap="round"/><circle cx="772.7" cy="780.6" r="4.7" fill="#e6f2f4" stroke="#4a4a4a" stroke-width="1.3"/><path d="M779.4 777.2H784.2M781.8 774.8V779.6M779.4 781.2H784.2" stroke="#3a3a3a" stroke-width="1.1"/><path d="M795 774.2H810.6V790H795Z" fill="none" stroke="#4a4a4a" stroke-width="1.2" stroke-dasharray="1.6 2.2"/><rect x="793.5" y="773" width="13" height="13" fill="#f0f0f0"/><path d="M806 785.2L809.8 789" stroke="#3a3a3a" stroke-width="2.8" stroke-linecap="round"/><circle cx="801.4" cy="780.6" r="6.6" fill="#dcecee" stroke="#4a4a4a" stroke-width="1.4"/><path d="M816.6 779.8h5.9l-2.95 4z" fill="#2e2e2e"/><rect x="829.4" y="774.6" width="15.8" height="12.4" rx="1.2" fill="#fff" stroke="#777" stroke-width="1.4"/><rect x="831.8" y="776.6" width="11" height="8.4" fill="#98b5e1" stroke="#4a6aa6" stroke-width="0.9"/><path d="M834 787.6H840.6L841.4 790H833.2Z" fill="#fff" stroke="#777" stroke-width="0.9"/><path d="M847.8 779.8h5.9l-2.95 4z" fill="#2e2e2e"/><defs><linearGradient id="ngr" x1="0" y1="0" x2="0" y2="1"><stop offset="0" stop-color="#fff"/><stop offset="1" stop-color="#aab4cc"/></linearGradient></defs><rect x="861.6" y="774.4" width="15.6" height="15.6" rx="1" fill="url(#ngr)" stroke="#666" stroke-width="1.3"/><path d="M864.2 774.4v15.6M861.6 777.0h15.6M866.8 774.4v15.6M861.6 779.6h15.6M869.4 774.4v15.6M861.6 782.2h15.6M872.0 774.4v15.6M861.6 784.8h15.6M874.6 774.4v15.6M861.6 787.4h15.6" stroke="#6a6a70" stroke-width="0.9"/><path d="M880 779.8h5.9l-2.95 4z" fill="#2e2e2e"/><rect x="893.6" y="774.9" width="7" height="6.2" rx="1" fill="#8ea9d9" stroke="#5272b2" stroke-width="1.2"/><rect x="901.6" y="774.9" width="7" height="6.2" rx="1" fill="#8ea9d9" stroke="#5272b2" stroke-width="1.2"/><rect x="893.6" y="782" width="7" height="6.2" rx="1" fill="#8ea9d9" stroke="#5272b2" stroke-width="1.2"/><rect x="901.6" y="782" width="7" height="6.2" rx="1" fill="#8ea9d9" stroke="#5272b2" stroke-width="1.2"/><path d="M912.4 779.8h5.9l-2.95 4z" fill="#2e2e2e"/></svg>
<div class="b" style="left:0px;top:798.8px;width:1600px;height:49.2px;background:#f2f2f2;border-top:1px solid #dadada;box-sizing:border-box;"></div>
<svg class="b" style="left:0;top:800px" width="1600" height="48" viewBox="0 800 1600 48"><defs><g id="tsk"><path d="M3.4 1.4H12M1.3 3.6V12.6M14.5 3.6V7.4M3.4 14.8H7" stroke="#777" stroke-width="1.15" fill="none"/><circle cx="1.3" cy="1.3" r="1.35" fill="#2a8ff0"/><circle cx="14.5" cy="1.3" r="1.35" fill="#2a8ff0"/><circle cx="1.3" cy="14.8" r="1.35" fill="#2a8ff0"/><path d="M9.6 13.6L13.6 9.6L15.6 11.4L11.4 15.4Z" fill="#f7b733"/><circle cx="15.2" cy="9.8" r="1.7" fill="#f2474c"/><path d="M9.6 13.6L11.4 15.4L8.6 16.5Z" fill="#555"/></g><g id="tex"><polygon points="-0.5,12.8 8.5,12.8 12,10.3 12,13.1 8.5,16.2 -0.5,16.2" fill="#c6c6c6" /><polygon points="-0.5,3.8 8.5,3.8 8.5,12.8 -0.5,12.8" fill="#6aade4" /><polygon points="-0.5,3.8 3.2,0 12,0 8.5,3.8" fill="#8fcbf9" /><polygon points="8.5,3.8 12,0 12,10.3 8.5,12.8" fill="#4890cc" /><path d="M14.5 13.1V3" stroke="#2e2e2e" stroke-width="1.3"/><path d="M12.8 4L14.5 0.9L16.2 4Z" fill="#2e2e2e"/></g><g id="tsh"><polygon points="0.8,3.6 12,3.6 12,15 0.8,15" fill="#e6e6e6" /><polygon points="0.8,3.6 4,0.8 15.4,0.8 12,3.6" fill="#f6f6f6" /><polygon points="12,3.6 15.4,0.8 15.4,12 12,15" fill="#bdbdbd" /><path d="M0.8 3.6L4 0.8H15.4V12L12 15H0.8Z" fill="none" stroke="#707070" stroke-width="1.5" stroke-linejoin="round"/><path d="M0.8 3.6H12V15M12 3.6L15.4 0.8" fill="none" stroke="#9a9a9a" stroke-width="0.8"/><rect x="2.8" y="5.6" width="7.2" height="7.6" fill="#fff"/><polygon points="2.8,5.6 6.2,5.6 6.2,9.8 2.8,13.2" fill="#4590cc" /><polygon points="2.8,13.2 6.2,9.8 10,9.8 10,13.2" fill="#8fcbf9" /></g><g id="tpl"><path d="M-0.2 16.2V5.6L5.1 0H8.5L4.4 5.6V16.2Z" fill="#e2e2e2" stroke="#666" stroke-width="1.3" stroke-linejoin="round"/><polygon points="4.46,5.64 9.78,0.33 9.78,10.95 4.46,16.26" fill="#5bc183" /><polygon points="11,5.64 16.3,0.33 16.3,10.95 11,16.26" fill="#e69a63" /></g><g id="tnc"><path d="M-0.3 16V6.6L4.2 2.2H10L14.1 6V10.9L9.8 16Z" fill="#dcdcdc" stroke="#6a6a6a" stroke-width="1.4" stroke-linejoin="round"/><polygon points="10.4,10.4 14.1,8 14.1,10.9 10,15.6" fill="#c2c2c2" /><polygon points="0.6,6.8 4.4,3 9.6,3 6,6.8" fill="#efefef" /><polygon points="11.3,0.3 12.29,2.0 14.2,1.5 13.7,3.41 15.4,4.4 13.7,5.39 14.2,7.3 12.29,6.8 11.3,8.5 10.31,6.8 8.4,7.3 8.9,5.39 7.2,4.4 8.9,3.41 8.4,1.5 10.31,2.0" fill="#ffa90a" /></g><g id="tfi"><path d="M-0.3 16V4.2L3.4 0.2H8.5Q14.8 1.2 16.2 8V11L11.8 16Z" fill="#dcdcdc" stroke="#757575" stroke-width="1.4" stroke-linejoin="round"/><path d="M12.2 9.8L16 8V11L11.8 15.6Z" fill="#c4c4c4"/><path d="M0.6 4.4L3.8 1H8L5.6 3.6Z" fill="#efefef"/><path d="M6.6 2.4L9.6 -0.2Q15.4 1.4 16.4 6.4L13.4 8.9Q12.4 4 6.6 2.4Z" fill="#5aa5e0"/></g><g id="tmv"><path d="M7.4 3.4V12.2M3 7.7H11.8" stroke="#333" stroke-width="1.9"/><path d="M7.4 0L10.2 4.2H4.6ZM7.4 15.4L10.2 11.2H4.6ZM-0.4 7.7L3.8 4.9V10.5ZM15.2 7.7L11 4.9V10.5Z" fill="#333"/></g></defs><path d="M11 818h1.7v14H11zM13 825L24 818v14z" fill="#48484b"/><path d="M36.6 825L47.2 818.5v13zM48.1 822h1.9v6.3h-1.9z" fill="#48484b"/><path d="M64.2 817L75.8 825L64.2 833z" fill="#48484b"/><path d="M88.3 822h1.9v6.3h-1.9zM91.3 818.5L102 825L91.3 831.5z" fill="#48484b"/><path d="M115.4 818L126.2 825L115.4 832zM126.5 818h1.7v14h-1.7z" fill="#48484b"/><path d="M160.2 841.6H1136.3M160.75 835.8V841.6M185.75 835.8V841.6M210.75 835.8V841.6M235.75 835.8V841.6M260.75 835.8V841.6M285.75 835.8V841.6M310.75 835.8V841.6M335.75 835.8V841.6M360.75 835.8V841.6M385.75 835.8V841.6M410.75 835.8V841.6M435.75 835.8V841.6M460.75 835.8V841.6M485.75 835.8V841.6M510.75 835.8V841.6M535.75 835.8V841.6M560.75 835.8V841.6M585.75 835.8V841.6M610.75 835.8V841.6M635.75 835.8V841.6M660.75 835.8V841.6M685.75 835.8V841.6M710.75 835.8V841.6M735.75 835.8V841.6M760.75 835.8V841.6M785.75 835.8V841.6M810.75 835.8V841.6M835.75 835.8V841.6M860.75 835.8V841.6M885.75 835.8V841.6M910.75 835.8V841.6M935.75 835.8V841.6M960.75 835.8V841.6M985.75 835.8V841.6M1010.75 835.8V841.6M1035.75 835.8V841.6M1060.75 835.8V841.6M1085.75 835.8V841.6M1110.75 835.8V841.6M1135.75 835.8V841.6" stroke="#cbcbcb" stroke-width="1.5" fill="none"/><use href="#tsk" x="152.6" y="815.8"/><use href="#tex" x="177.6" y="815.8"/><use href="#tsh" x="202.6" y="815.8"/><use href="#tsk" x="227.6" y="815.8"/><use href="#tex" x="252.6" y="815.8"/><use href="#tsk" x="277.6" y="815.8"/><use href="#tex" x="302.6" y="815.8"/><use href="#tsk" x="327.6" y="815.8"/><use href="#tex" x="352.6" y="815.8"/><use href="#tpl" x="377.6" y="815.8"/><use href="#tsk" x="402.6" y="815.8"/><use href="#tex" x="427.6" y="815.8"/><use href="#tsh" x="452.6" y="815.8"/><use href="#tsk" x="477.6" y="815.8"/><use href="#tex" x="502.6" y="815.8"/><use href="#tsk" x="527.6" y="815.8"/><use href="#tex" x="552.6" y="815.8"/><use href="#tnc" x="577.6" y="815.8"/><use href="#tpl" x="602.6" y="815.8"/><use href="#tsk" x="627.6" y="815.8"/><use href="#tex" x="652.6" y="815.8"/><use href="#tex" x="677.6" y="815.8"/><use href="#tsh" x="702.6" y="815.8"/><use href="#tsk" x="727.6" y="815.8"/><use href="#tex" x="752.6" y="815.8"/><use href="#tfi" x="777.6" y="815.8"/><use href="#tfi" x="802.6" y="815.8"/><use href="#tsk" x="827.6" y="815.8"/><use href="#tex" x="852.6" y="815.8"/><use href="#tsk" x="877.6" y="815.8"/><use href="#tex" x="902.6" y="815.8"/><use href="#tsk" x="927.6" y="815.8"/><use href="#tex" x="952.6" y="815.8"/><use href="#tfi" x="977.6" y="815.8"/><use href="#tsk" x="1002.6" y="815.8"/><use href="#tex" x="1027.6" y="815.8"/><use href="#tsk" x="1052.6" y="815.8"/><use href="#tex" x="1077.6" y="815.8"/><use href="#tmv" x="1102.6" y="815.8"/><use href="#tmv" x="1127.6" y="815.8"/><path d="M1141.7 810H1153.9V813.3L1148.9 818.3V842.7H1146.7V818.3L1141.7 813.3Z" fill="#646464"/><g transform="translate(1578,825)" fill="#8a8a8a"><rect x="-2" y="-8.6" width="4" height="4.2" transform="rotate(0)"/><rect x="-2" y="-8.6" width="4" height="4.2" transform="rotate(45)"/><rect x="-2" y="-8.6" width="4" height="4.2" transform="rotate(90)"/><rect x="-2" y="-8.6" width="4" height="4.2" transform="rotate(135)"/><rect x="-2" y="-8.6" width="4" height="4.2" transform="rotate(180)"/><rect x="-2" y="-8.6" width="4" height="4.2" transform="rotate(225)"/><rect x="-2" y="-8.6" width="4" height="4.2" transform="rotate(270)"/><rect x="-2" y="-8.6" width="4" height="4.2" transform="rotate(315)"/><circle r="6.3"/><circle r="2.9" fill="#f2f2f2"/></g></svg>
</body></html>
